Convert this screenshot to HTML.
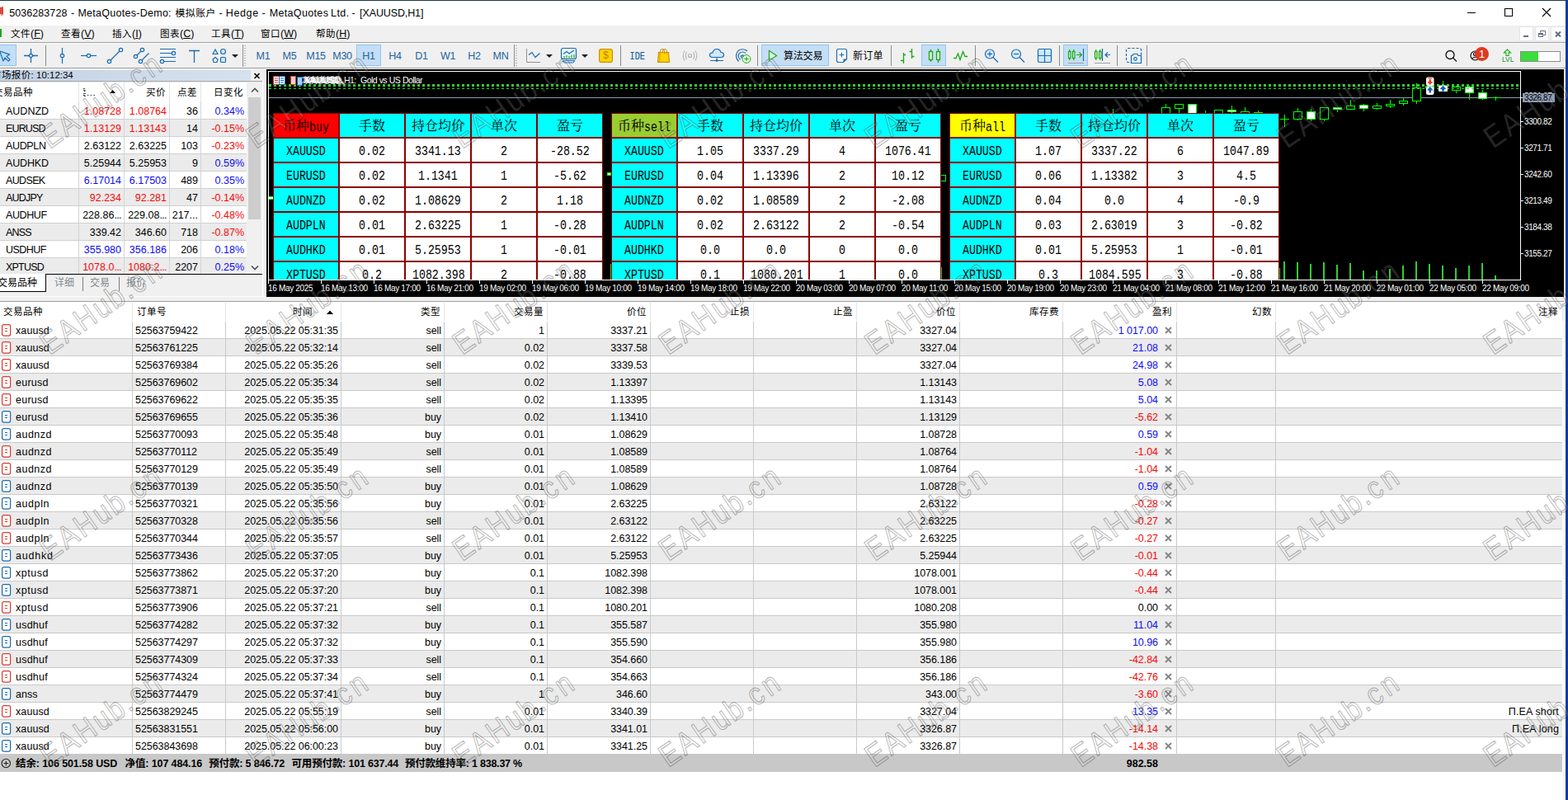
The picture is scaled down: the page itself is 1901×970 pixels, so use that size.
<!DOCTYPE html>
<html lang="zh-CN"><head><meta charset="utf-8"><title>MetaTrader 5</title>
<style>
html,body{margin:0;padding:0;background:#fff;}
body{width:1901px;height:970px;overflow:hidden;position:relative;font-family:"Liberation Sans","Noto Sans CJK SC",sans-serif;font-size:12px;color:#000;line-height:1;}
.a{position:absolute;}
.t{position:absolute;white-space:nowrap;line-height:1;}
svg{position:absolute;overflow:visible;}
#win{position:absolute;left:0;top:0;width:1901px;height:970px;overflow:hidden;background:#fff;}
#titlebar{left:0;top:1px;width:1898px;height:30px;background:#fff;}
#menubar{left:0;top:31px;width:1898px;height:20px;background:#f0f0f0;}
#toolbar{left:0;top:51px;width:1898px;height:32px;background:#f0f0f0;border-top:1px solid #a0a0a0;box-sizing:border-box;}
.menu{top:35px;font-size:12.5px;letter-spacing:0;}
.tf{top:62px;font-size:12.5px;color:#1b63a1;width:32px;text-align:center;letter-spacing:-0.3px;}
.sep{width:1px;background:#8a8a8a;top:55px;height:25px;}
.selbtn{background:#c4def5;border:1px solid #8fc6f5;box-sizing:border-box;}
/* market watch */
#mw{left:0;top:83px;width:321px;height:277px;background:#f0f0f0;overflow:hidden;}
.mwr{position:absolute;left:0;width:299px;height:20px;border-bottom:1px solid #d0d0d0;}
.mwr .c{position:absolute;top:5px;font-size:12.5px;white-space:nowrap;letter-spacing:0;}
.mwr .v{position:absolute;top:0;width:1px;height:20px;background:#d4d4d4;}
.red{color:#f40808;} .blue{color:#0c0cf4;}
/* chart */
#chart{left:323px;top:84px;width:1573px;height:276px;background:#000;overflow:hidden;}
.pt{font-family:"Liberation Serif","Noto Serif CJK SC",serif;}
.cell{position:absolute;width:80px;height:30px;box-sizing:border-box;border:1px solid #8b0000;overflow:hidden;}
.cell span{position:absolute;left:0;top:1px;width:78px;height:28px;line-height:28px;text-align:center;white-space:nowrap;font-size:16px;color:#000;}
.cell span i{font-style:normal;display:inline-block;transform-origin:50% 50%;}
/* trade table */
#tt{left:0;top:366px;width:1898px;height:604px;background:#fff;overflow:hidden;}
.tr{position:absolute;left:0;width:1894px;height:20px;border-bottom:1px solid #c9c9c9;}
.tr.g{background:#ebebeb;}
.tr .c{position:absolute;top:4.5px;font-size:12.5px;white-space:nowrap;letter-spacing:-0.05px;}
.tr .r{text-align:right;}
.tr .v{position:absolute;top:0;width:1px;height:21px;background:#c9c9c9;}
.wm{font-family:"Liberation Sans",sans-serif;}

.ax{font-size:10px;color:#fff;font-family:"Liberation Sans",sans-serif;letter-spacing:-0.4px;}
.tm{letter-spacing:-0.32px;}
.k{font-size:11.5px;letter-spacing:0.5px;}
.cell .cj{font-family:"Noto Serif CJK SC","Liberation Serif",serif;font-size:16px;font-weight:normal;position:relative;top:-1px;}
.cell span.cj{position:absolute;top:0;}
.cell .m{font-family:"Liberation Mono",monospace;font-size:16.6px;transform:scale(0.8,1);letter-spacing:0;}
</style></head>
<body><div id="win">
<div class="a" style="left:0;top:0;width:1901px;height:1px;background:#1c3a4a"></div>
<div class="a" style="left:1898px;top:0;width:3px;height:970px;background:#0b3b9c"></div>
<div class="a" id="titlebar"></div>
<svg style="left:0;top:8px" width="6" height="14" viewBox="0 0 6 14"><path d="M0 1 L4 0 L4 10 L0 9Z" fill="#e0483c"/><path d="M0 9 L4 10 L2 12Z" fill="#f4a49c"/></svg>
<div class="t" style="left:11.20px;top:10px;font-size:12.5px;letter-spacing:0.074px;">5036283728</div>
<div class="t" style="left:85.90px;top:10px;font-size:12.5px;letter-spacing:0.000px;">-</div>
<div class="t" style="left:94.40px;top:10px;font-size:12.5px;letter-spacing:0.275px;">MetaQuotes-Demo:</div>
<div class="t" style="left:212.50px;top:10.5px;font-size:11.8px;letter-spacing:0.532px;">模拟账户</div>
<div class="t" style="left:265.40px;top:10px;font-size:12.5px;letter-spacing:0.000px;">-</div>
<div class="t" style="left:273.80px;top:10px;font-size:12.5px;letter-spacing:0.614px;">Hedge</div>
<div class="t" style="left:317.40px;top:10px;font-size:12.5px;letter-spacing:0.000px;">-</div>
<div class="t" style="left:326.70px;top:10px;font-size:12.5px;letter-spacing:0.345px;">MetaQuotes</div>
<div class="t" style="left:401.10px;top:10px;font-size:12.5px;letter-spacing:0.414px;">Ltd.</div>
<div class="t" style="left:426.40px;top:10px;font-size:12.5px;letter-spacing:0.000px;">-</div>
<div class="t" style="left:436.10px;top:10px;font-size:12.5px;letter-spacing:-0.120px;">[XAUUSD,H1]</div>
<svg style="left:1770px;top:5px" width="120" height="20" viewBox="0 0 120 20"><path d="M9 10.5 H19" stroke="#000" stroke-width="1" fill="none"/><rect x="54.5" y="5.5" width="9" height="9" stroke="#000" stroke-width="1" fill="none"/><path d="M100 5 L110 15 M110 5 L100 15" stroke="#000" stroke-width="1.1" fill="none"/></svg>
<div class="a" id="menubar"></div>
<div class="a" style="left:0;top:35px;width:2px;height:10px;background:#1ca81c"></div>
<div class="t menu" style="left:13px"><span class="k">文件</span>(<u>F</u>)</div>
<div class="t menu" style="left:74px"><span class="k">查看</span>(<u>V</u>)</div>
<div class="t menu" style="left:136px"><span class="k">插入</span>(<u>I</u>)</div>
<div class="t menu" style="left:194px"><span class="k">图表</span>(<u>C</u>)</div>
<div class="t menu" style="left:256px"><span class="k">工具</span>(<u>T</u>)</div>
<div class="t menu" style="left:316px"><span class="k">窗口</span>(<u>W</u>)</div>
<div class="t menu" style="left:383px"><span class="k">帮助</span>(<u>H</u>)</div>
<div class="a" style="left:1842px;top:32px;width:17px;height:18px;background:#fff;border:1px solid #e6e6e6;box-sizing:border-box"></div>
<div class="a" style="left:1861px;top:32px;width:17px;height:18px;background:#fff;border:1px solid #e6e6e6;box-sizing:border-box"></div>
<div class="a" style="left:1880px;top:32px;width:17px;height:18px;background:#fff;border:1px solid #e6e6e6;box-sizing:border-box"></div>
<svg style="left:1842px;top:33px" width="56" height="17" viewBox="0 0 56 17"><rect x="5" y="10" width="6" height="2" fill="#5f6f82"/><path d="M25.5 6.5 V4.5 H31.5 V9.5 H29.5" stroke="#5f6f82" stroke-width="1" fill="none"/><rect x="23.5" y="7.5" width="5" height="4" stroke="#5f6f82" stroke-width="1" fill="none"/><rect x="23" y="7" width="6" height="2" fill="#5f6f82"/><path d="M44 5.5 L50 11.5 M50 5.5 L44 11.5" stroke="#5f6f82" stroke-width="2" fill="none"/></svg>
<div class="a" id="toolbar"></div>
<div class="a" style="left:0;top:52px;width:1898px;height:1px;background:#fbfbfb"></div>
<div class="a" style="left:0;top:82px;width:1898px;height:1px;background:#a0a0a0"></div>
<div class="a" style="left:0;top:83px;width:1898px;height:1px;background:#fafafa"></div>
<div class="a selbtn" style="left:-1px;top:54px;width:21px;height:26px"></div>
<div class="a selbtn" style="left:432px;top:54px;width:30px;height:26px"></div>
<div class="a selbtn" style="left:923px;top:54px;width:82px;height:26px"></div>
<div class="a selbtn" style="left:1117px;top:54px;width:30px;height:26px"></div>
<div class="a selbtn" style="left:1289px;top:54px;width:30px;height:26px"></div>
<div class="a sep" style="left:55px"></div>
<div class="a sep" style="left:752px"></div>
<div class="a sep" style="left:918px"></div>
<div class="a sep" style="left:1080px"></div>
<div class="a sep" style="left:1182px"></div>
<div class="a sep" style="left:1284px"></div>
<div class="a sep" style="left:1354px"></div>
<div class="a sep" style="left:1390px"></div>
<div class="a" style="left:294px;top:54px;width:1px;height:27px;background:#909090"></div>
<div class="a" style="left:296px;top:55px;width:2px;height:25px;background:repeating-linear-gradient(#b8b8b8 0 1px,transparent 1px 3px)"></div>
<div class="a" style="left:623px;top:54px;width:1px;height:27px;background:#909090"></div>
<div class="a" style="left:625px;top:55px;width:2px;height:25px;background:repeating-linear-gradient(#b8b8b8 0 1px,transparent 1px 3px)"></div>
<div class="t tf" style="left:303px">M1</div>
<div class="t tf" style="left:335px">M5</div>
<div class="t tf" style="left:367px">M15</div>
<div class="t tf" style="left:399px">M30</div>
<div class="t tf" style="left:431px">H1</div>
<div class="t tf" style="left:463px">H4</div>
<div class="t tf" style="left:495px">D1</div>
<div class="t tf" style="left:527px">W1</div>
<div class="t tf" style="left:559px">H2</div>
<div class="t tf" style="left:591px">MN</div>
<div class="t" style="left:760.5px;top:61.5px;font-family:'Liberation Mono',monospace;font-size:13px;color:#125ea0;transform:scaleX(0.78);transform-origin:50% 50%;-webkit-text-stroke:0.2px #125ea0">IDE</div>
<div class="t" style="left:950px;top:62px;font-size:12px;letter-spacing:-0.2px">算法交易</div>
<div class="t" style="left:1034px;top:62px;font-size:12px;letter-spacing:0.3px">新订单</div>
<svg style="left:0;top:52px" width="1898" height="30" viewBox="0 52 1898 30" fill="none" stroke-linecap="butt"><path d="M-3 61 L11.7 66.1 L8.2 68.300 L12 72.400 L10.2 74.100 L6 70 L4 74 L0 63 Z" fill="#bee3fb" stroke-linejoin="round" stroke="#1b6ab0" stroke-width="1.2"/><path d="M29 67.5 H46 M37.5 59 V76" stroke="#1b6ab0" stroke-width="1.3"/><path d="M37.5 64.800 L40.2 67.5 L37.5 70.2 L34.8 67.5 Z" fill="#cfe9ff" stroke="#1b6ab0" stroke-width="1.3"/><path d="M75.5 58 V77" stroke="#1b6ab0" stroke-width="1.2"/><circle cx="75.5" cy="67.5" r="2.2" fill="#e8f3fc" stroke="#1b6ab0" stroke-width="1.2"/><path d="M98 67.5 H117" stroke="#1b6ab0" stroke-width="1.2"/><circle cx="107.5" cy="67.5" r="2.2" fill="#e8f3fc" stroke="#1b6ab0" stroke-width="1.2"/><path d="M132.5 74.5 L146.5 60.5" stroke="#1b6ab0" stroke-width="1.2"/><circle cx="132.5" cy="74.5" r="2.2" fill="#e8f3fc" stroke="#1b6ab0" stroke-width="1.2"/><circle cx="146.5" cy="60.5" r="2.2" fill="#e8f3fc" stroke="#1b6ab0" stroke-width="1.2"/><path d="M164.5 68.5 L172.5 60.5 M170.5 74.5 L180.5 64.5" stroke="#1b6ab0" stroke-width="1.2"/><circle cx="164.5" cy="68.5" r="2.2" fill="#e8f3fc" stroke="#1b6ab0" stroke-width="1.2"/><circle cx="172.5" cy="60.5" r="2.2" fill="#e8f3fc" stroke="#1b6ab0" stroke-width="1.2"/><circle cx="170.5" cy="74.5" r="2.2" fill="#e8f3fc" stroke="#1b6ab0" stroke-width="1.2"/><path d="M194 59.5 H213 M194 64.5 H209 M194 69.5 H213 M198 74.5 H213" stroke="#1b6ab0" stroke-width="1.2"/><circle cx="210.5" cy="64.5" r="2.2" fill="#e8f3fc" stroke="#1b6ab0" stroke-width="1.2"/><circle cx="196.5" cy="74.5" r="2.2" fill="#e8f3fc" stroke="#1b6ab0" stroke-width="1.2"/><path d="M229 61.5 H242 M235.5 61.5 V76" stroke="#1b6ab0" stroke-width="1.3"/><path d="M258 65.5 L261 60 L264 65.5 Z" fill="#e8f3fc" stroke="#1b6ab0" stroke-width="1.2"/><circle cx="270.5" cy="62.5" r="3" fill="#cfe9ff" stroke="#1b6ab0" stroke-width="1.2"/><path d="M258 72 L261 69.5 L264 72 L263 75.5 H259 Z" fill="#e8f3fc" stroke="#1b6ab0" stroke-width="1.2"/><rect x="267.5" y="69.5" width="6" height="6" rx="1" fill="#cfe9ff" stroke="#1b6ab0" stroke-width="1.2"/><path d="M281 66 H289 L285 70 Z" fill="#222" stroke="none"/><path d="M662 66 H670 L666 70 Z" fill="#222" stroke="none"/><path d="M705 66 H713 L709 70 Z" fill="#222" stroke="none"/><path d="M638.5 59 V75.5 H655" stroke="#909090" stroke-width="1"/><path d="M641 66.5 L645 63.5 L649 69.5 L654.5 64.5" stroke="#1b6ab0" stroke-width="1.2"/><rect x="680.5" y="58.5" width="18" height="13" rx="2" fill="#e8f3fc" stroke="#1b6ab0" stroke-width="1.2"/><path d="M682 73.5 H697 L695 76 H684 Z" fill="#cfe9ff" stroke="#1b6ab0" stroke-width="1"/><path d="M683 65.5 L687 62.5 L690 65 L696 61" stroke="#1b6ab0" stroke-width="1.1"/><path d="M684 68 V70.5 M687 67 V70.5 M690 68 V70.5 M693 66.5 V70.5 M696 66 V70.5" stroke="#18a818" stroke-width="1.2"/><rect x="726.6" y="59.6" width="15.8" height="15.8" rx="2.5" fill="#ffd400" stroke="#cc8f00" stroke-width="1.2"/><path d="M798.5 63.500 H810.500 L811.500 75.400 H797.500 Z" fill="#ffd400" stroke="#cc8f00" stroke-width="1.1"/><path d="M800 63.500 L799.500 75" stroke="#e0a400" stroke-width="1"/><path d="M800.500 65.500 V62.200 Q800.500 59.500 803 59.500 Q805.500 59.500 805.500 62.200 V65.500 M803.500 63 V62.200 Q803.500 59.500 806 59.500 Q808.500 59.500 808.500 62.200 V65.500" stroke="#cc8f00" stroke-width="1"/><circle cx="836.5" cy="67.5" r="2" stroke="#b0b0b0" stroke-width="1.2"/><path d="M832.5 63 Q830 67.5 832.5 72 M840.5 63 Q843 67.5 840.5 72 M830 61.5 Q826.5 67.5 830 73.5 M843 61.5 Q846.5 67.5 843 73.5" stroke="#b8b8b8" stroke-width="1.1"/><path d="M864 69.500 Q860.500 69.500 860.500 66.500 Q860.500 64 864 63.800 Q865 59.500 869 59.500 Q873 59.500 874 63.500 Q877.500 63.800 877.500 66.500 Q877.500 69.500 874 69.500 Z" fill="#cfe8fc" stroke="#1b6ab0" stroke-width="1.2"/><path d="M861 73.500 H877 M869 69.500 V73" stroke="#1b6ab0" stroke-width="1.1"/><circle cx="869" cy="73.500" r="1.400" fill="#1b6ab0"/><path d="M895.5 74.500 Q890 68 894.500 62 Q900 57.500 906 62 M897.500 72.500 Q893.500 68 896.500 64.500 Q900 61.500 904 64.500 M899.500 70.500 Q897.500 68.500 899 67" stroke="#1b6ab0" stroke-width="1.2"/><circle cx="900.5" cy="67.500" r="1.2" fill="#1b6ab0" stroke="none"/><circle cx="905" cy="71.500" r="4.900" fill="#ecffec" stroke="#18a818" stroke-width="1"/><path d="M902.300 71.500 H907.700 M905 68.800 V74.200" stroke="#18a818" stroke-width="1.1"/><path d="M932.5 61.5 L941.5 67.5 L932.5 73.5 Z" fill="#e0ffe0" stroke="#18a818" stroke-width="1.2"/><path d="M1016.5 59.5 H1024.5 Q1026.5 59.5 1026.5 61.5 V71.5 L1022.5 75.5 H1016.5 Q1014.5 75.5 1014.5 73.5 V61.5 Q1014.5 59.5 1016.5 59.5 Z" fill="#fff" stroke="#1b6ab0" stroke-width="1.2"/><path d="M1026.5 71.5 L1022.5 75.5 V71.5 Z" fill="#1b6ab0"/><path d="M1017.5 66.5 H1023.5 M1020.5 63.5 V69.5" stroke="#1b6ab0" stroke-width="1.1"/><path d="M1095.5 64 V77 M1092 73.5 H1095.5 M1095.5 66.5 H1098 M1105.5 59 V71 M1102.5 62.5 H1105.5 M1105.5 68.5 H1108.5" stroke="#18a818" stroke-width="1.3"/><rect x="1126.5" y="62.5" width="4" height="10" fill="#d8f5d8" stroke="#18a818" stroke-width="1.3"/><rect x="1135.5" y="62.5" width="4" height="10" fill="#d8f5d8" stroke="#18a818" stroke-width="1.3"/><path d="M1128.5 60 V62 M1128.5 73 V75 M1137.5 59 V62 M1137.5 73 V76" stroke="#18a818" stroke-width="1.3"/><path d="M1156 70.5 H1159 L1161.5 65 L1164 72.5 L1167.5 62.5 L1170 68.5 H1173" stroke="#18a818" stroke-width="1.3"/><circle cx="1200" cy="65.5" r="5.5" fill="#d4ecff" stroke="#1b6ab0" stroke-width="1.2"/><path d="M1204 69.5 L1210 75.5" stroke="#1b6ab0" stroke-width="1.3"/><path d="M1197 65.5 H1203" stroke="#1b6ab0" stroke-width="1.2"/><path d="M1200 62.5 V68.5" stroke="#1b6ab0" stroke-width="1.2"/><circle cx="1232" cy="65.5" r="5.5" fill="#d4ecff" stroke="#1b6ab0" stroke-width="1.2"/><path d="M1236 69.5 L1242 75.5" stroke="#1b6ab0" stroke-width="1.3"/><path d="M1229 65.5 H1235" stroke="#1b6ab0" stroke-width="1.2"/><rect x="1258.5" y="59.5" width="16" height="16" rx="1.5" fill="#cfe9ff" stroke="#1b6ab0" stroke-width="1.2"/><path d="M1266.5 59.5 V75.5 M1258.5 67.5 H1274.5" stroke="#1b6ab0" stroke-width="1.2"/><rect x="1295.5" y="62.5" width="2.5" height="8" fill="#d8f5d8" stroke="#18a818" stroke-width="1.2"/><rect x="1300.5" y="62.5" width="2.5" height="8" fill="#d8f5d8" stroke="#18a818" stroke-width="1.2"/><path d="M1296.7 60 V62 M1296.7 71 V73 M1301.7 60 V62 M1301.7 71 V73" stroke="#18a818" stroke-width="1.2"/><path d="M1305 66.5 H1311 M1308.5 63.5 L1311.5 66.5 L1308.5 69.5" stroke="#18a818" stroke-width="1.2"/><path d="M1313.5 59 V74" stroke="#1b6ab0" stroke-width="1.2"/><path d="M1295 76.5 H1314" stroke="#a0a0a0" stroke-width="1"/><rect x="1327.5" y="62.5" width="2.5" height="8" fill="#d8f5d8" stroke="#18a818" stroke-width="1.2"/><rect x="1332.5" y="62.5" width="2.5" height="8" fill="#d8f5d8" stroke="#18a818" stroke-width="1.2"/><path d="M1328.7 60 V62 M1328.7 71 V73 M1333.7 60 V62 M1333.7 71 V73" stroke="#18a818" stroke-width="1.2"/><path d="M1336.5 59 V74" stroke="#1b6ab0" stroke-width="1.2"/><path d="M1340 66.5 H1346 M1343 63.5 L1340 66.5 L1343 69.5" stroke="#1b6ab0" stroke-width="1.2"/><path d="M1327 76.5 H1346" stroke="#a0a0a0" stroke-width="1"/><rect x="1365.5" y="58.5" width="18" height="17" rx="2" stroke="#1b6ab0" stroke-width="1.2" stroke-dasharray="3 2"/><path d="M1371.5 67.5 H1373 L1374 65.5 H1379 L1380 67.5 H1383.5 V76.5 H1371.5 Z" fill="#e8f3fc" stroke="#1b6ab0" stroke-width="1.2"/><circle cx="1376.5" cy="71.5" r="1.8" stroke="#1b6ab0" stroke-width="1.2"/><circle cx="1758" cy="66.5" r="5" stroke="#111" stroke-width="1.3"/><path d="M1761.5 70 L1766 74.5" stroke="#111" stroke-width="1.3"/><circle cx="1788.5" cy="67.500" r="5.5" stroke="#111" stroke-width="1.2"/><circle cx="1788.5" cy="65.5" r="2" stroke="#111" stroke-width="1.1"/><path d="M1784.5 71.5 Q1788.5 67 1792.500 71.500" stroke="#111" stroke-width="1.1"/><circle cx="1796.5" cy="65.500" r="8.5" fill="#e03a22"/><path d="M1827.5 60 L1823.500 64 H1826 V67.5 H1829 V64 H1831.500 Z" fill="#f4fff4" stroke="#18a818" stroke-width="1.1"/><rect x="1843.5" y="62.500" width="48" height="12" fill="#fff" stroke="#8a8a8a" stroke-width="1"/><rect x="1844" y="63" width="21" height="11" fill="#3cdc3c"/></svg>
<div class="t" style="left:728.5px;top:61px;width:12px;text-align:center;font-size:12.5px;color:#c08400">$</div>
<div class="t" style="left:1792.5px;top:59px;width:8px;text-align:center;font-size:13px;color:#fff">1</div>
<div class="t" style="left:1821px;top:68px;font-size:8.5px;color:#109828;letter-spacing:0">LVL</div>
<div class="a" id="mw">
<div class="a" style="left:0;top:2px;width:304px;height:13px;background:linear-gradient(90deg,#c0d0e4 0,#d0dcea 60%,#d6e1ee 100%)"></div>
<div class="a" style="left:304px;top:0;width:17px;height:16px;background:#f0f0f0"></div>
<div class="t" style="left:-10px;top:3px;font-size:11.5px;letter-spacing:0"><span style="letter-spacing:0.4px">市场报价</span>: 10:12:34</div>
<svg style="left:307px;top:4px" width="10" height="10" viewBox="0 0 10 10"><path d="M1.5 2 L7.500 8 M7.500 2 L1.5 8" stroke="#000" stroke-width="1.6" fill="none"/></svg>
<div class="a" style="left:0;top:17px;width:299px;height:24px;background:#fff"></div>
<div class="a" style="left:0;top:15px;width:318px;height:1px;background:#a8a8a8"></div><div class="a" style="left:0;top:16px;width:318px;height:1px;background:#e8e8e8"></div>
<div class="a" style="left:95px;top:17px;width:1px;height:24px;background:#e4e4e4"></div>
<div class="a" style="left:150px;top:17px;width:1px;height:24px;background:#e4e4e4"></div>
<div class="a" style="left:205px;top:17px;width:1px;height:24px;background:#e4e4e4"></div>
<div class="a" style="left:243px;top:17px;width:1px;height:24px;background:#e4e4e4"></div>
<div class="t k" style="left:-8px;top:24px">交易品种</div>
<div class="t k" style="left:101px;top:24px;width:18px;overflow:hidden;height:14px"><span style="margin-left:-8px">卖...</span></div>
<svg style="left:132.5px;top:26px" width="7" height="4" viewBox="0 0 7 4"><path d="M0 4 L3.5 0 L7 4Z" fill="#000"/></svg>
<div class="t k" style="left:150px;top:24px;width:51px;text-align:right;">买价</div>
<div class="t k" style="left:205px;top:24px;width:34px;text-align:right;">点差</div>
<div class="t k" style="left:243px;top:24px;width:52px;text-align:right;">日变化</div>
<div class="mwr" style="top:41px;background:#fff">
<div class="c" style="left:7px;letter-spacing:0px">AUDNZD</div>
<div class="c red" style="left:95px;width:52px;text-align:right">1.08728</div>
<div class="c red" style="left:150px;width:52px;text-align:right">1.08764</div>
<div class="c" style="left:205px;width:35px;text-align:right">36</div>
<div class="c blue" style="left:243px;width:53px;text-align:right">0.34%</div>
<div class="v" style="left:95px"></div>
<div class="v" style="left:150px"></div>
<div class="v" style="left:205px"></div>
<div class="v" style="left:243px"></div>
</div>
<div class="mwr" style="top:62px;background:#ebebeb">
<div class="c" style="left:7px;letter-spacing:-0.85px">EURUSD</div>
<div class="c red" style="left:95px;width:52px;text-align:right">1.13129</div>
<div class="c red" style="left:150px;width:52px;text-align:right">1.13143</div>
<div class="c" style="left:205px;width:35px;text-align:right">14</div>
<div class="c red" style="left:243px;width:53px;text-align:right">-0.15%</div>
<div class="v" style="left:95px"></div>
<div class="v" style="left:150px"></div>
<div class="v" style="left:205px"></div>
<div class="v" style="left:243px"></div>
</div>
<div class="mwr" style="top:83px;background:#fff">
<div class="c" style="left:7px;letter-spacing:-0.35px">AUDPLN</div>
<div class="c " style="left:95px;width:52px;text-align:right">2.63122</div>
<div class="c " style="left:150px;width:52px;text-align:right">2.63225</div>
<div class="c" style="left:205px;width:35px;text-align:right">103</div>
<div class="c red" style="left:243px;width:53px;text-align:right">-0.23%</div>
<div class="v" style="left:95px"></div>
<div class="v" style="left:150px"></div>
<div class="v" style="left:205px"></div>
<div class="v" style="left:243px"></div>
</div>
<div class="mwr" style="top:104px;background:#ebebeb">
<div class="c" style="left:7px;letter-spacing:-0.15px">AUDHKD</div>
<div class="c " style="left:95px;width:52px;text-align:right">5.25944</div>
<div class="c " style="left:150px;width:52px;text-align:right">5.25953</div>
<div class="c" style="left:205px;width:35px;text-align:right">9</div>
<div class="c blue" style="left:243px;width:53px;text-align:right">0.59%</div>
<div class="v" style="left:95px"></div>
<div class="v" style="left:150px"></div>
<div class="v" style="left:205px"></div>
<div class="v" style="left:243px"></div>
</div>
<div class="mwr" style="top:125px;background:#fff">
<div class="c" style="left:7px;letter-spacing:-0.65px">AUDSEK</div>
<div class="c blue" style="left:95px;width:52px;text-align:right">6.17014</div>
<div class="c blue" style="left:150px;width:52px;text-align:right">6.17503</div>
<div class="c" style="left:205px;width:35px;text-align:right">489</div>
<div class="c blue" style="left:243px;width:53px;text-align:right">0.35%</div>
<div class="v" style="left:95px"></div>
<div class="v" style="left:150px"></div>
<div class="v" style="left:205px"></div>
<div class="v" style="left:243px"></div>
</div>
<div class="mwr" style="top:146px;background:#ebebeb">
<div class="c" style="left:7px;letter-spacing:-0.8px">AUDJPY</div>
<div class="c red" style="left:95px;width:52px;text-align:right">92.234</div>
<div class="c red" style="left:150px;width:52px;text-align:right">92.281</div>
<div class="c" style="left:205px;width:35px;text-align:right">47</div>
<div class="c red" style="left:243px;width:53px;text-align:right">-0.14%</div>
<div class="v" style="left:95px"></div>
<div class="v" style="left:150px"></div>
<div class="v" style="left:205px"></div>
<div class="v" style="left:243px"></div>
</div>
<div class="mwr" style="top:167px;background:#fff">
<div class="c" style="left:7px;letter-spacing:-0.4px">AUDHUF</div>
<div class="c " style="left:95px;width:52px;text-align:right">228.86<span style="letter-spacing:-0.6px">...</span></div>
<div class="c " style="left:150px;width:52px;text-align:right">229.08<span style="letter-spacing:-0.6px">...</span></div>
<div class="c" style="left:205px;width:35px;text-align:right">217...</div>
<div class="c red" style="left:243px;width:53px;text-align:right">-0.48%</div>
<div class="v" style="left:95px"></div>
<div class="v" style="left:150px"></div>
<div class="v" style="left:205px"></div>
<div class="v" style="left:243px"></div>
</div>
<div class="mwr" style="top:188px;background:#ebebeb">
<div class="c" style="left:7px;letter-spacing:-0.85px">ANSS</div>
<div class="c " style="left:95px;width:52px;text-align:right">339.42</div>
<div class="c " style="left:150px;width:52px;text-align:right">346.60</div>
<div class="c" style="left:205px;width:35px;text-align:right">718</div>
<div class="c red" style="left:243px;width:53px;text-align:right">-0.87%</div>
<div class="v" style="left:95px"></div>
<div class="v" style="left:150px"></div>
<div class="v" style="left:205px"></div>
<div class="v" style="left:243px"></div>
</div>
<div class="mwr" style="top:209px;background:#fff">
<div class="c" style="left:7px;letter-spacing:-0.55px">USDHUF</div>
<div class="c blue" style="left:95px;width:52px;text-align:right">355.980</div>
<div class="c blue" style="left:150px;width:52px;text-align:right">356.186</div>
<div class="c" style="left:205px;width:35px;text-align:right">206</div>
<div class="c blue" style="left:243px;width:53px;text-align:right">0.18%</div>
<div class="v" style="left:95px"></div>
<div class="v" style="left:150px"></div>
<div class="v" style="left:205px"></div>
<div class="v" style="left:243px"></div>
</div>
<div class="mwr" style="top:230px;background:#ebebeb">
<div class="c" style="left:7px;letter-spacing:-0.8px">XPTUSD</div>
<div class="c red" style="left:95px;width:52px;text-align:right">1078.0<span style="letter-spacing:-0.6px">...</span></div>
<div class="c red" style="left:150px;width:52px;text-align:right">1080.2<span style="letter-spacing:-0.6px">...</span></div>
<div class="c" style="left:205px;width:35px;text-align:right">2207</div>
<div class="c blue" style="left:243px;width:53px;text-align:right">0.25%</div>
<div class="v" style="left:95px"></div>
<div class="v" style="left:150px"></div>
<div class="v" style="left:205px"></div>
<div class="v" style="left:243px"></div>
</div>
<div class="a" style="left:299px;top:17px;width:19px;height:232px;background:#f0f0f0"></div>
<div class="a" style="left:301px;top:35px;width:15px;height:148px;background:#cdcdcd"></div>
<svg style="left:303px;top:22px" width="12" height="8" viewBox="0 0 12 8"><path d="M2 6.500 L6 2.500 L10 6.500" stroke="#505050" stroke-width="1.6" fill="none"/></svg>
<svg style="left:303px;top:237.5px" width="12" height="8" viewBox="0 0 12 8"><path d="M2 1.5 L6 5.500 L10 1.5" stroke="#505050" stroke-width="1.6" fill="none"/></svg>
<div class="a" style="left:0;top:249px;width:318px;height:1px;background:#000"></div><div class="a" style="left:0;top:250px;width:318px;height:27px;background:#f0f0f0"></div><div class="a" style="left:0;top:276px;width:321px;height:1px;background:#fcfcfc"></div>
<div class="a" style="left:0;top:249px;width:56px;height:22px;background:#fff;border-right:1px solid #000;border-bottom:1px solid #000;box-sizing:border-box"></div>
<div class="t" style="left:-3px;top:254px;font-size:12px">交易品种</div>
<div class="t" style="left:66px;top:254px;font-size:12px;color:#848a90">详细</div>
<div class="t" style="left:109px;top:254px;font-size:12px;color:#848a90">交易</div>
<div class="t" style="left:153px;top:254px;font-size:12px;color:#848a90">报价</div>
<div class="a" style="left:100px;top:253px;width:1px;height:17px;background:#7c7c7c"></div>
<div class="a" style="left:144px;top:253px;width:1px;height:17px;background:#7c7c7c"></div>
<div class="a" style="left:318px;top:17px;width:1px;height:260px;background:#fff"></div>
</div>
<div class="a" id="chart">
<svg style="left:0;top:0" width="1573" height="276" viewBox="323 84 1573 276" fill="none" shape-rendering="crispEdges"><path d="M325.5 339.500 V86.500 H1843.5 V339.500 Z" stroke="#fff" stroke-width="1"/><path d="M326 118.500 H1843" stroke="#8c9cb4" stroke-width="1"/><rect x="1349" y="132" width="1" height="11" fill="#00ff00"/><rect x="1344.5" y="138.5" width="10" height="2" fill="#000" stroke="#00ff00" stroke-width="1"/><rect x="1413" y="126" width="1" height="16" fill="#00ff00"/><rect x="1408.5" y="130.5" width="10" height="10" fill="#000" stroke="#00ff00" stroke-width="1"/><rect x="1429" y="126" width="1" height="14" fill="#00ff00"/><rect x="1424.5" y="126.5" width="10" height="5" fill="#000" stroke="#00ff00" stroke-width="1"/><rect x="1445" y="126" width="1" height="14" fill="#00ff00"/><rect x="1440.5" y="126.5" width="10" height="13" fill="#fff" stroke="#00ff00" stroke-width="1"/><rect x="1461" y="134" width="1" height="7" fill="#00ff00"/><rect x="1456.5" y="137.5" width="10" height="2" fill="#000" stroke="#00ff00" stroke-width="1"/><rect x="1477" y="133" width="1" height="8" fill="#00ff00"/><rect x="1472.5" y="133.5" width="10" height="6" fill="#000" stroke="#00ff00" stroke-width="1"/><rect x="1493" y="128" width="1" height="12" fill="#00ff00"/><rect x="1488.5" y="133.5" width="10" height="2" fill="#fff" stroke="#00ff00" stroke-width="1"/><rect x="1509" y="130" width="1" height="11" fill="#00ff00"/><rect x="1504.5" y="135.5" width="10" height="4" fill="#000" stroke="#00ff00" stroke-width="1"/><rect x="1525" y="134" width="1" height="7" fill="#00ff00"/><rect x="1520.5" y="136.5" width="10" height="3" fill="#000" stroke="#00ff00" stroke-width="1"/><rect x="1557" y="139" width="1" height="15" fill="#00ff00"/><rect x="1552" y="144" width="11" height="1" fill="#00ff00"/><rect x="1573" y="131" width="1" height="15" fill="#00ff00"/><rect x="1568.5" y="135.5" width="10" height="9" fill="#000" stroke="#00ff00" stroke-width="1"/><rect x="1589" y="132" width="1" height="15" fill="#00ff00"/><rect x="1584.5" y="135.5" width="10" height="9" fill="#fff" stroke="#00ff00" stroke-width="1"/><rect x="1605" y="130" width="1" height="17" fill="#00ff00"/><rect x="1600.5" y="130.5" width="10" height="14" fill="#000" stroke="#00ff00" stroke-width="1"/><rect x="1621" y="130" width="1" height="6" fill="#00ff00"/><rect x="1616.5" y="130.5" width="10" height="2" fill="#fff" stroke="#00ff00" stroke-width="1"/><rect x="1637" y="121" width="1" height="12" fill="#00ff00"/><rect x="1632.5" y="128.5" width="10" height="4" fill="#000" stroke="#00ff00" stroke-width="1"/><rect x="1653" y="126" width="1" height="9" fill="#00ff00"/><rect x="1648.5" y="127.5" width="10" height="4" fill="#fff" stroke="#00ff00" stroke-width="1"/><rect x="1669" y="125" width="1" height="8" fill="#00ff00"/><rect x="1664.5" y="128.5" width="10" height="3" fill="#000" stroke="#00ff00" stroke-width="1"/><rect x="1685" y="121" width="1" height="10" fill="#00ff00"/><rect x="1680.5" y="126.5" width="10" height="2" fill="#000" stroke="#00ff00" stroke-width="1"/><rect x="1701" y="119" width="1" height="9" fill="#00ff00"/><rect x="1696.5" y="122.5" width="10" height="3" fill="#000" stroke="#00ff00" stroke-width="1"/><rect x="1717" y="101" width="1" height="25" fill="#00ff00"/><rect x="1712.5" y="106.5" width="10" height="16" fill="#000" stroke="#00ff00" stroke-width="1"/><rect x="1733" y="100" width="1" height="9" fill="#00ff00"/><rect x="1728.5" y="104.5" width="10" height="2" fill="#000" stroke="#00ff00" stroke-width="1"/><rect x="1749" y="98" width="1" height="13" fill="#00ff00"/><rect x="1744.5" y="104.5" width="10" height="6" fill="#fff" stroke="#00ff00" stroke-width="1"/><rect x="1765" y="104" width="1" height="9" fill="#00ff00"/><rect x="1760.5" y="105.5" width="10" height="4" fill="#000" stroke="#00ff00" stroke-width="1"/><rect x="1781" y="104" width="1" height="17" fill="#00ff00"/><rect x="1776.5" y="105.5" width="10" height="7" fill="#fff" stroke="#00ff00" stroke-width="1"/><rect x="1797" y="109" width="1" height="12" fill="#00ff00"/><rect x="1792.5" y="112.5" width="10" height="7" fill="#fff" stroke="#00ff00" stroke-width="1"/><rect x="1813" y="117" width="1" height="5" fill="#00ff00"/><rect x="1808" y="118" width="11" height="1" fill="#00ff00"/><rect x="1556" y="317" width="2" height="22" fill="#32cd32"/><rect x="1572" y="318" width="2" height="21" fill="#32cd32"/><rect x="1588" y="320" width="2" height="19" fill="#32cd32"/><rect x="1604" y="318" width="2" height="21" fill="#32cd32"/><rect x="1620" y="321" width="2" height="18" fill="#32cd32"/><rect x="1636" y="319" width="2" height="20" fill="#32cd32"/><rect x="1652" y="328" width="2" height="11" fill="#32cd32"/><rect x="1668" y="328" width="2" height="11" fill="#32cd32"/><rect x="1684" y="326" width="2" height="13" fill="#32cd32"/><rect x="1700" y="322" width="2" height="17" fill="#32cd32"/><rect x="1716" y="317" width="2" height="22" fill="#32cd32"/><rect x="1732" y="320" width="2" height="19" fill="#32cd32"/><rect x="1748" y="322" width="2" height="17" fill="#32cd32"/><rect x="1764" y="325" width="2" height="14" fill="#32cd32"/><rect x="1780" y="322" width="2" height="17" fill="#32cd32"/><rect x="1796" y="319" width="2" height="20" fill="#32cd32"/><rect x="1812" y="334" width="2" height="5" fill="#32cd32"/><rect x="340" y="322" width="2" height="17" fill="#32cd32"/><rect x="356" y="320" width="2" height="19" fill="#32cd32"/><rect x="372" y="318" width="2" height="21" fill="#32cd32"/><rect x="388" y="316" width="2" height="23" fill="#32cd32"/><rect x="404" y="314" width="2" height="25" fill="#32cd32"/><rect x="420" y="312" width="2" height="27" fill="#32cd32"/><rect x="436" y="321" width="2" height="18" fill="#32cd32"/><rect x="452" y="319" width="2" height="20" fill="#32cd32"/><rect x="468" y="317" width="2" height="22" fill="#32cd32"/><rect x="484" y="315" width="2" height="24" fill="#32cd32"/><rect x="500" y="313" width="2" height="26" fill="#32cd32"/><rect x="516" y="322" width="2" height="17" fill="#32cd32"/><rect x="532" y="320" width="2" height="19" fill="#32cd32"/><rect x="548" y="318" width="2" height="21" fill="#32cd32"/><rect x="564" y="316" width="2" height="23" fill="#32cd32"/><rect x="580" y="314" width="2" height="25" fill="#32cd32"/><rect x="596" y="312" width="2" height="27" fill="#32cd32"/><rect x="612" y="321" width="2" height="18" fill="#32cd32"/><rect x="628" y="319" width="2" height="20" fill="#32cd32"/><rect x="644" y="317" width="2" height="22" fill="#32cd32"/><rect x="660" y="315" width="2" height="24" fill="#32cd32"/><rect x="676" y="313" width="2" height="26" fill="#32cd32"/><rect x="692" y="322" width="2" height="17" fill="#32cd32"/><rect x="708" y="320" width="2" height="19" fill="#32cd32"/><rect x="724" y="318" width="2" height="21" fill="#32cd32"/><rect x="740" y="320" width="2" height="19" fill="#32cd32"/><rect x="756" y="314" width="2" height="25" fill="#32cd32"/><rect x="772" y="312" width="2" height="27" fill="#32cd32"/><rect x="788" y="321" width="2" height="18" fill="#32cd32"/><rect x="804" y="319" width="2" height="20" fill="#32cd32"/><rect x="820" y="317" width="2" height="22" fill="#32cd32"/><rect x="836" y="315" width="2" height="24" fill="#32cd32"/><rect x="852" y="313" width="2" height="26" fill="#32cd32"/><rect x="868" y="322" width="2" height="17" fill="#32cd32"/><rect x="884" y="320" width="2" height="19" fill="#32cd32"/><rect x="900" y="318" width="2" height="21" fill="#32cd32"/><rect x="916" y="316" width="2" height="23" fill="#32cd32"/><rect x="932" y="314" width="2" height="25" fill="#32cd32"/><rect x="948" y="312" width="2" height="27" fill="#32cd32"/><rect x="964" y="321" width="2" height="18" fill="#32cd32"/><rect x="980" y="319" width="2" height="20" fill="#32cd32"/><rect x="996" y="317" width="2" height="22" fill="#32cd32"/><rect x="1012" y="315" width="2" height="24" fill="#32cd32"/><rect x="1028" y="313" width="2" height="26" fill="#32cd32"/><rect x="1044" y="322" width="2" height="17" fill="#32cd32"/><rect x="1060" y="320" width="2" height="19" fill="#32cd32"/><rect x="1076" y="318" width="2" height="21" fill="#32cd32"/><rect x="1092" y="316" width="2" height="23" fill="#32cd32"/><rect x="1108" y="314" width="2" height="25" fill="#32cd32"/><rect x="1124" y="312" width="2" height="27" fill="#32cd32"/><rect x="1140" y="324" width="2" height="15" fill="#32cd32"/><rect x="1156" y="319" width="2" height="20" fill="#32cd32"/><rect x="1172" y="317" width="2" height="22" fill="#32cd32"/><rect x="1188" y="315" width="2" height="24" fill="#32cd32"/><rect x="1204" y="313" width="2" height="26" fill="#32cd32"/><rect x="1220" y="322" width="2" height="17" fill="#32cd32"/><rect x="1236" y="320" width="2" height="19" fill="#32cd32"/><rect x="1252" y="318" width="2" height="21" fill="#32cd32"/><rect x="1268" y="316" width="2" height="23" fill="#32cd32"/><rect x="1284" y="314" width="2" height="25" fill="#32cd32"/><rect x="1300" y="312" width="2" height="27" fill="#32cd32"/><rect x="1316" y="321" width="2" height="18" fill="#32cd32"/><rect x="1332" y="319" width="2" height="20" fill="#32cd32"/><rect x="1348" y="317" width="2" height="22" fill="#32cd32"/><rect x="1364" y="315" width="2" height="24" fill="#32cd32"/><rect x="1380" y="313" width="2" height="26" fill="#32cd32"/><rect x="1396" y="322" width="2" height="17" fill="#32cd32"/><rect x="1412" y="320" width="2" height="19" fill="#32cd32"/><rect x="1428" y="318" width="2" height="21" fill="#32cd32"/><rect x="1444" y="316" width="2" height="23" fill="#32cd32"/><rect x="1460" y="314" width="2" height="25" fill="#32cd32"/><rect x="1476" y="312" width="2" height="27" fill="#32cd32"/><rect x="1492" y="321" width="2" height="18" fill="#32cd32"/><rect x="1508" y="319" width="2" height="20" fill="#32cd32"/><rect x="1524" y="317" width="2" height="22" fill="#32cd32"/><rect x="1540" y="315" width="2" height="24" fill="#32cd32"/><path d="M326 103.500 H1842" stroke="#32cd32" stroke-width="3" stroke-dasharray="3 3"/><path d="M326 107.500 H1842" stroke="#32cd32" stroke-width="1" stroke-dasharray="3 3"/><rect x="325" y="340" width="1" height="4" fill="#fff"/><rect x="389" y="340" width="1" height="4" fill="#fff"/><rect x="453" y="340" width="1" height="4" fill="#fff"/><rect x="517" y="340" width="1" height="4" fill="#fff"/><rect x="581" y="340" width="1" height="4" fill="#fff"/><rect x="645" y="340" width="1" height="4" fill="#fff"/><rect x="709" y="340" width="1" height="4" fill="#fff"/><rect x="773" y="340" width="1" height="4" fill="#fff"/><rect x="837" y="340" width="1" height="4" fill="#fff"/><rect x="901" y="340" width="1" height="4" fill="#fff"/><rect x="965" y="340" width="1" height="4" fill="#fff"/><rect x="1029" y="340" width="1" height="4" fill="#fff"/><rect x="1093" y="340" width="1" height="4" fill="#fff"/><rect x="1157" y="340" width="1" height="4" fill="#fff"/><rect x="1221" y="340" width="1" height="4" fill="#fff"/><rect x="1285" y="340" width="1" height="4" fill="#fff"/><rect x="1349" y="340" width="1" height="4" fill="#fff"/><rect x="1413" y="340" width="1" height="4" fill="#fff"/><rect x="1477" y="340" width="1" height="4" fill="#fff"/><rect x="1541" y="340" width="1" height="4" fill="#fff"/><rect x="1605" y="340" width="1" height="4" fill="#fff"/><rect x="1669" y="340" width="1" height="4" fill="#fff"/><rect x="1733" y="340" width="1" height="4" fill="#fff"/><rect x="1797" y="340" width="1" height="4" fill="#fff"/><rect x="1844" y="147" width="3" height="1" fill="#fff"/><rect x="1844" y="179" width="3" height="1" fill="#fff"/><rect x="1844" y="211" width="3" height="1" fill="#fff"/><rect x="1844" y="243" width="3" height="1" fill="#fff"/><rect x="1844" y="275" width="3" height="1" fill="#fff"/><rect x="1844" y="307" width="3" height="1" fill="#fff"/><rect x="1844" y="118" width="3" height="1" fill="#fff"/></svg>
<div class="cell" style="left:8px;top:53px;background:#ff0000"><span class="hd"><b class="cj">币种</b><i class="m" style="margin:0 -3px">buy</i></span></div>
<div class="cell" style="left:88px;top:53px;background:#00ffff"><span class="cj">手数</span></div>
<div class="cell" style="left:168px;top:53px;background:#00ffff"><span class="cj">持仓均价</span></div>
<div class="cell" style="left:248px;top:53px;background:#00ffff"><span class="cj">单次</span></div>
<div class="cell" style="left:328px;top:53px;background:#00ffff"><span class="cj">盈亏</span></div>
<div class="cell" style="left:8px;top:83px;background:#00ffff"><span><i class="m">XAUUSD</i></span></div>
<div class="cell" style="left:88px;top:83px;background:#ffffff"><span><i class="m">0.02</i></span></div>
<div class="cell" style="left:168px;top:83px;background:#ffffff"><span><i class="m">3341.13</i></span></div>
<div class="cell" style="left:248px;top:83px;background:#ffffff"><span><i class="m">2</i></span></div>
<div class="cell" style="left:328px;top:83px;background:#ffffff"><span><i class="m">-28.52</i></span></div>
<div class="cell" style="left:8px;top:113px;background:#00ffff"><span><i class="m">EURUSD</i></span></div>
<div class="cell" style="left:88px;top:113px;background:#ffffff"><span><i class="m">0.02</i></span></div>
<div class="cell" style="left:168px;top:113px;background:#ffffff"><span><i class="m">1.1341</i></span></div>
<div class="cell" style="left:248px;top:113px;background:#ffffff"><span><i class="m">1</i></span></div>
<div class="cell" style="left:328px;top:113px;background:#ffffff"><span><i class="m">-5.62</i></span></div>
<div class="cell" style="left:8px;top:143px;background:#00ffff"><span><i class="m">AUDNZD</i></span></div>
<div class="cell" style="left:88px;top:143px;background:#ffffff"><span><i class="m">0.02</i></span></div>
<div class="cell" style="left:168px;top:143px;background:#ffffff"><span><i class="m">1.08629</i></span></div>
<div class="cell" style="left:248px;top:143px;background:#ffffff"><span><i class="m">2</i></span></div>
<div class="cell" style="left:328px;top:143px;background:#ffffff"><span><i class="m">1.18</i></span></div>
<div class="cell" style="left:8px;top:173px;background:#00ffff"><span><i class="m">AUDPLN</i></span></div>
<div class="cell" style="left:88px;top:173px;background:#ffffff"><span><i class="m">0.01</i></span></div>
<div class="cell" style="left:168px;top:173px;background:#ffffff"><span><i class="m">2.63225</i></span></div>
<div class="cell" style="left:248px;top:173px;background:#ffffff"><span><i class="m">1</i></span></div>
<div class="cell" style="left:328px;top:173px;background:#ffffff"><span><i class="m">-0.28</i></span></div>
<div class="cell" style="left:8px;top:203px;background:#00ffff"><span><i class="m">AUDHKD</i></span></div>
<div class="cell" style="left:88px;top:203px;background:#ffffff"><span><i class="m">0.01</i></span></div>
<div class="cell" style="left:168px;top:203px;background:#ffffff"><span><i class="m">5.25953</i></span></div>
<div class="cell" style="left:248px;top:203px;background:#ffffff"><span><i class="m">1</i></span></div>
<div class="cell" style="left:328px;top:203px;background:#ffffff"><span><i class="m">-0.01</i></span></div>
<div class="cell" style="left:8px;top:233px;background:#00ffff"><span><i class="m">XPTUSD</i></span></div>
<div class="cell" style="left:88px;top:233px;background:#ffffff"><span><i class="m">0.2</i></span></div>
<div class="cell" style="left:168px;top:233px;background:#ffffff"><span><i class="m">1082.398</i></span></div>
<div class="cell" style="left:248px;top:233px;background:#ffffff"><span><i class="m">2</i></span></div>
<div class="cell" style="left:328px;top:233px;background:#ffffff"><span><i class="m">-0.88</i></span></div>
<div class="cell" style="left:418px;top:53px;background:#9acd32"><span class="hd"><b class="cj">币种</b><i class="m" style="margin:0 -4px">sell</i></span></div>
<div class="cell" style="left:498px;top:53px;background:#00ffff"><span class="cj">手数</span></div>
<div class="cell" style="left:578px;top:53px;background:#00ffff"><span class="cj">持仓均价</span></div>
<div class="cell" style="left:658px;top:53px;background:#00ffff"><span class="cj">单次</span></div>
<div class="cell" style="left:738px;top:53px;background:#00ffff"><span class="cj">盈亏</span></div>
<div class="cell" style="left:418px;top:83px;background:#00ffff"><span><i class="m">XAUUSD</i></span></div>
<div class="cell" style="left:498px;top:83px;background:#ffffff"><span><i class="m">1.05</i></span></div>
<div class="cell" style="left:578px;top:83px;background:#ffffff"><span><i class="m">3337.29</i></span></div>
<div class="cell" style="left:658px;top:83px;background:#ffffff"><span><i class="m">4</i></span></div>
<div class="cell" style="left:738px;top:83px;background:#ffffff"><span><i class="m">1076.41</i></span></div>
<div class="cell" style="left:418px;top:113px;background:#00ffff"><span><i class="m">EURUSD</i></span></div>
<div class="cell" style="left:498px;top:113px;background:#ffffff"><span><i class="m">0.04</i></span></div>
<div class="cell" style="left:578px;top:113px;background:#ffffff"><span><i class="m">1.13396</i></span></div>
<div class="cell" style="left:658px;top:113px;background:#ffffff"><span><i class="m">2</i></span></div>
<div class="cell" style="left:738px;top:113px;background:#ffffff"><span><i class="m">10.12</i></span></div>
<div class="cell" style="left:418px;top:143px;background:#00ffff"><span><i class="m">AUDNZD</i></span></div>
<div class="cell" style="left:498px;top:143px;background:#ffffff"><span><i class="m">0.02</i></span></div>
<div class="cell" style="left:578px;top:143px;background:#ffffff"><span><i class="m">1.08589</i></span></div>
<div class="cell" style="left:658px;top:143px;background:#ffffff"><span><i class="m">2</i></span></div>
<div class="cell" style="left:738px;top:143px;background:#ffffff"><span><i class="m">-2.08</i></span></div>
<div class="cell" style="left:418px;top:173px;background:#00ffff"><span><i class="m">AUDPLN</i></span></div>
<div class="cell" style="left:498px;top:173px;background:#ffffff"><span><i class="m">0.02</i></span></div>
<div class="cell" style="left:578px;top:173px;background:#ffffff"><span><i class="m">2.63122</i></span></div>
<div class="cell" style="left:658px;top:173px;background:#ffffff"><span><i class="m">2</i></span></div>
<div class="cell" style="left:738px;top:173px;background:#ffffff"><span><i class="m">-0.54</i></span></div>
<div class="cell" style="left:418px;top:203px;background:#00ffff"><span><i class="m">AUDHKD</i></span></div>
<div class="cell" style="left:498px;top:203px;background:#ffffff"><span><i class="m">0.0</i></span></div>
<div class="cell" style="left:578px;top:203px;background:#ffffff"><span><i class="m">0.0</i></span></div>
<div class="cell" style="left:658px;top:203px;background:#ffffff"><span><i class="m">0</i></span></div>
<div class="cell" style="left:738px;top:203px;background:#ffffff"><span><i class="m">0.0</i></span></div>
<div class="cell" style="left:418px;top:233px;background:#00ffff"><span><i class="m">XPTUSD</i></span></div>
<div class="cell" style="left:498px;top:233px;background:#ffffff"><span><i class="m">0.1</i></span></div>
<div class="cell" style="left:578px;top:233px;background:#ffffff"><span><i class="m">1080.201</i></span></div>
<div class="cell" style="left:658px;top:233px;background:#ffffff"><span><i class="m">1</i></span></div>
<div class="cell" style="left:738px;top:233px;background:#ffffff"><span><i class="m">0.0</i></span></div>
<div class="cell" style="left:828px;top:53px;background:#ffff00"><span class="hd"><b class="cj">币种</b><i class="m" style="margin:0 -3px">all</i></span></div>
<div class="cell" style="left:908px;top:53px;background:#00ffff"><span class="cj">手数</span></div>
<div class="cell" style="left:988px;top:53px;background:#00ffff"><span class="cj">持仓均价</span></div>
<div class="cell" style="left:1068px;top:53px;background:#00ffff"><span class="cj">单次</span></div>
<div class="cell" style="left:1148px;top:53px;background:#00ffff"><span class="cj">盈亏</span></div>
<div class="cell" style="left:828px;top:83px;background:#00ffff"><span><i class="m">XAUUSD</i></span></div>
<div class="cell" style="left:908px;top:83px;background:#ffffff"><span><i class="m">1.07</i></span></div>
<div class="cell" style="left:988px;top:83px;background:#ffffff"><span><i class="m">3337.22</i></span></div>
<div class="cell" style="left:1068px;top:83px;background:#ffffff"><span><i class="m">6</i></span></div>
<div class="cell" style="left:1148px;top:83px;background:#ffffff"><span><i class="m">1047.89</i></span></div>
<div class="cell" style="left:828px;top:113px;background:#00ffff"><span><i class="m">EURUSD</i></span></div>
<div class="cell" style="left:908px;top:113px;background:#ffffff"><span><i class="m">0.06</i></span></div>
<div class="cell" style="left:988px;top:113px;background:#ffffff"><span><i class="m">1.13382</i></span></div>
<div class="cell" style="left:1068px;top:113px;background:#ffffff"><span><i class="m">3</i></span></div>
<div class="cell" style="left:1148px;top:113px;background:#ffffff"><span><i class="m">4.5</i></span></div>
<div class="cell" style="left:828px;top:143px;background:#00ffff"><span><i class="m">AUDNZD</i></span></div>
<div class="cell" style="left:908px;top:143px;background:#ffffff"><span><i class="m">0.04</i></span></div>
<div class="cell" style="left:988px;top:143px;background:#ffffff"><span><i class="m">0.0</i></span></div>
<div class="cell" style="left:1068px;top:143px;background:#ffffff"><span><i class="m">4</i></span></div>
<div class="cell" style="left:1148px;top:143px;background:#ffffff"><span><i class="m">-0.9</i></span></div>
<div class="cell" style="left:828px;top:173px;background:#00ffff"><span><i class="m">AUDPLN</i></span></div>
<div class="cell" style="left:908px;top:173px;background:#ffffff"><span><i class="m">0.03</i></span></div>
<div class="cell" style="left:988px;top:173px;background:#ffffff"><span><i class="m">2.63019</i></span></div>
<div class="cell" style="left:1068px;top:173px;background:#ffffff"><span><i class="m">3</i></span></div>
<div class="cell" style="left:1148px;top:173px;background:#ffffff"><span><i class="m">-0.82</i></span></div>
<div class="cell" style="left:828px;top:203px;background:#00ffff"><span><i class="m">AUDHKD</i></span></div>
<div class="cell" style="left:908px;top:203px;background:#ffffff"><span><i class="m">0.01</i></span></div>
<div class="cell" style="left:988px;top:203px;background:#ffffff"><span><i class="m">5.25953</i></span></div>
<div class="cell" style="left:1068px;top:203px;background:#ffffff"><span><i class="m">1</i></span></div>
<div class="cell" style="left:1148px;top:203px;background:#ffffff"><span><i class="m">-0.01</i></span></div>
<div class="cell" style="left:828px;top:233px;background:#00ffff"><span><i class="m">XPTUSD</i></span></div>
<div class="cell" style="left:908px;top:233px;background:#ffffff"><span><i class="m">0.3</i></span></div>
<div class="cell" style="left:988px;top:233px;background:#ffffff"><span><i class="m">1084.595</i></span></div>
<div class="cell" style="left:1068px;top:233px;background:#ffffff"><span><i class="m">3</i></span></div>
<div class="cell" style="left:1148px;top:233px;background:#ffffff"><span><i class="m">-0.88</i></span></div>
<div class="a" style="left:3px;top:154px;width:5px;height:4px;background:#fff;border-top:1px solid #00ff00;border-bottom:1px solid #00ff00;box-sizing:border-box"></div>
<div class="a" style="left:413px;top:125px;width:5px;height:4px;background:#fff;border:1px solid #00ff00;box-sizing:border-box"></div>
<div class="a" style="left:818px;top:128px;width:6px;height:8px;border:1px solid #00ff00;border-left:0;box-sizing:border-box"></div>
<div class="a" style="left:1228px;top:241px;width:1px;height:14px;background:#32cd32"></div>
<div class="a" style="left:0;top:256px;width:1573px;height:20px;background:#000"></div>
<div class="a" style="left:3px;top:255px;width:1518px;height:1px;background:#fff"></div>
<svg style="left:0;top:0" width="1573" height="276" viewBox="323 84 1573 276" fill="none" shape-rendering="crispEdges"><rect x="325" y="340" width="1" height="4" fill="#fff"/><rect x="389" y="340" width="1" height="4" fill="#fff"/><rect x="453" y="340" width="1" height="4" fill="#fff"/><rect x="517" y="340" width="1" height="4" fill="#fff"/><rect x="581" y="340" width="1" height="4" fill="#fff"/><rect x="645" y="340" width="1" height="4" fill="#fff"/><rect x="709" y="340" width="1" height="4" fill="#fff"/><rect x="773" y="340" width="1" height="4" fill="#fff"/><rect x="837" y="340" width="1" height="4" fill="#fff"/><rect x="901" y="340" width="1" height="4" fill="#fff"/><rect x="965" y="340" width="1" height="4" fill="#fff"/><rect x="1029" y="340" width="1" height="4" fill="#fff"/><rect x="1093" y="340" width="1" height="4" fill="#fff"/><rect x="1157" y="340" width="1" height="4" fill="#fff"/><rect x="1221" y="340" width="1" height="4" fill="#fff"/><rect x="1285" y="340" width="1" height="4" fill="#fff"/><rect x="1349" y="340" width="1" height="4" fill="#fff"/><rect x="1413" y="340" width="1" height="4" fill="#fff"/><rect x="1477" y="340" width="1" height="4" fill="#fff"/><rect x="1541" y="340" width="1" height="4" fill="#fff"/><rect x="1605" y="340" width="1" height="4" fill="#fff"/><rect x="1669" y="340" width="1" height="4" fill="#fff"/><rect x="1733" y="340" width="1" height="4" fill="#fff"/><rect x="1797" y="340" width="1" height="4" fill="#fff"/></svg>
<div class="t ax tm" style="left:2px;top:261px">16 May 2025</div>
<div class="t ax tm" style="left:66px;top:261px">16 May 13:00</div>
<div class="t ax tm" style="left:130px;top:261px">16 May 17:00</div>
<div class="t ax tm" style="left:194px;top:261px">16 May 21:00</div>
<div class="t ax tm" style="left:258px;top:261px">19 May 02:00</div>
<div class="t ax tm" style="left:322px;top:261px">19 May 06:00</div>
<div class="t ax tm" style="left:386px;top:261px">19 May 10:00</div>
<div class="t ax tm" style="left:450px;top:261px">19 May 14:00</div>
<div class="t ax tm" style="left:514px;top:261px">19 May 18:00</div>
<div class="t ax tm" style="left:578px;top:261px">19 May 22:00</div>
<div class="t ax tm" style="left:642px;top:261px">20 May 03:00</div>
<div class="t ax tm" style="left:706px;top:261px">20 May 07:00</div>
<div class="t ax tm" style="left:770px;top:261px">20 May 11:00</div>
<div class="t ax tm" style="left:834px;top:261px">20 May 15:00</div>
<div class="t ax tm" style="left:898px;top:261px">20 May 19:00</div>
<div class="t ax tm" style="left:962px;top:261px">20 May 23:00</div>
<div class="t ax tm" style="left:1026px;top:261px">21 May 04:00</div>
<div class="t ax tm" style="left:1090px;top:261px">21 May 08:00</div>
<div class="t ax tm" style="left:1154px;top:261px">21 May 12:00</div>
<div class="t ax tm" style="left:1218px;top:261px">21 May 16:00</div>
<div class="t ax tm" style="left:1282px;top:261px">21 May 20:00</div>
<div class="t ax tm" style="left:1346px;top:261px">22 May 01:00</div>
<div class="t ax tm" style="left:1410px;top:261px">22 May 05:00</div>
<div class="t ax tm" style="left:1474px;top:261px">22 May 09:00</div>
<div class="t ax" style="left:1525px;top:59px">3300.82</div>
<div class="t ax" style="left:1525px;top:91px">3271.71</div>
<div class="t ax" style="left:1525px;top:123px">3242.60</div>
<div class="t ax" style="left:1525px;top:155px">3213.49</div>
<div class="t ax" style="left:1525px;top:187px">3184.38</div>
<div class="t ax" style="left:1525px;top:219px">3155.27</div>
<div class="t ax" style="left:1525px;top:28px">3331.87</div>
<div class="a" style="left:1523px;top:29px;width:39px;height:11px;background:#8c9cb4"></div>
<div class="t ax" style="left:1525px;top:30px;color:#000">3326.87</div>
<svg style="left:1405px;top:9px" width="30" height="26" viewBox="0 0 30 26"><rect x="1" y="0.5" width="9.5" height="10.5" rx="2.5" fill="#fff"/><path d="M5.700 10 L2.200 6 H4.500 V3.200 H7 V6 H9.300 Z" fill="#f04020"/><rect x="3.500" y="1.300" width="4.500" height="1.200" fill="#f04020"/><rect x="1" y="11.500" width="9.500" height="10.500" rx="2.500" fill="#fff"/><path d="M5.700 12 L2 16.500 H4.500 V19.500 H7 V16.500 H9.500 Z" fill="#1060c0"/><rect x="16" y="10.500" width="11" height="7.500" rx="1.500" fill="#fff"/><path d="M21.500 10.700 L17.500 15 H20 V17.500 H23 V15 H25.500 Z" fill="#1060c0"/></svg>
<svg style="left:8px;top:8px" width="90" height="12" viewBox="0 0 90 12"><rect x="0.500" y="0.500" width="7" height="10" fill="#fff" stroke="#e03020" stroke-width="1"/><path d="M2 3 H6 M2 5.500 H6 M2 8 H6" stroke="#e03020" stroke-width="1"/><rect x="7.500" y="0.500" width="7" height="10" fill="#fff" stroke="#1060c0" stroke-width="1"/><path d="M9 3 H13 M9 5.500 H13 M9 8 H13" stroke="#1060c0" stroke-width="1"/><rect x="21.500" y="0.500" width="6" height="10" fill="#ffd0c8" stroke="#e03020" stroke-width="1"/><rect x="29.500" y="1.500" width="6" height="10" fill="#a8d0f0" stroke="#1060c0" stroke-width="1"/></svg>
<div class="t ax" style="left:45px;top:8px;font-size:10.5px;font-weight:bold;letter-spacing:0.1px;opacity:1">XAUUSD,</div>
<div class="t ax" style="left:47px;top:9px;font-size:10.5px;font-weight:bold;letter-spacing:0.1px;opacity:0.8">XAUUSD,</div>
<div class="t ax" style="left:43px;top:8px;font-size:10.5px;font-weight:bold;letter-spacing:0.1px;opacity:0.7">XAUUSD,</div>
<div class="t ax" style="left:46px;top:7px;font-size:10.5px;font-weight:bold;letter-spacing:0.1px;opacity:0.6">XAUUSD,</div>
<div class="t ax" id="ctitle2" style="left:94px;top:8px;font-size:10.5px;letter-spacing:-0.55px;word-spacing:0.3px">H1:&nbsp; Gold vs US Dollar</div>
</div>
<div class="a" style="left:1896px;top:84px;width:2px;height:276px;background:#f0f0f0"></div>
<div class="a" style="left:321px;top:84px;width:2px;height:276px;background:#f0f0f0"></div>
<div class="a" style="left:0;top:360px;width:1898px;height:6px;background:#f0f0f0"></div>
<div class="a" style="left:0;top:365px;width:1896px;height:1px;background:#a0a0a0"></div>
<div class="a" id="tt">
<div class="a" style="left:0;top:0;width:1894px;height:23px;background:#fff"></div>
<div class="a" style="left:160px;top:1px;width:1px;height:22px;background:#e5e5e5"></div>
<div class="a" style="left:273px;top:1px;width:1px;height:22px;background:#e5e5e5"></div>
<div class="a" style="left:413px;top:1px;width:1px;height:22px;background:#e5e5e5"></div>
<div class="a" style="left:538px;top:1px;width:1px;height:22px;background:#e5e5e5"></div>
<div class="a" style="left:663px;top:1px;width:1px;height:22px;background:#e5e5e5"></div>
<div class="a" style="left:788px;top:1px;width:1px;height:22px;background:#e5e5e5"></div>
<div class="a" style="left:913px;top:1px;width:1px;height:22px;background:#e5e5e5"></div>
<div class="a" style="left:1038px;top:1px;width:1px;height:22px;background:#e5e5e5"></div>
<div class="a" style="left:1163px;top:1px;width:1px;height:22px;background:#e5e5e5"></div>
<div class="a" style="left:1288px;top:1px;width:1px;height:22px;background:#e5e5e5"></div>
<div class="a" style="left:1426px;top:1px;width:1px;height:22px;background:#e5e5e5"></div>
<div class="a" style="left:1546px;top:1px;width:1px;height:22px;background:#e5e5e5"></div>
<div class="a" style="left:1894px;top:1px;width:1px;height:22px;background:#e5e5e5"></div>
<div class="t k" style="left:4px;top:6.5px">交易品种</div>
<div class="t k" style="left:166px;top:6.5px">订单号</div>
<div class="t k" style="left:279px;top:6.5px;width:100px;text-align:right">时间</div>
<div class="t k" style="left:434px;top:6.5px;width:100px;text-align:right">类型</div>
<div class="t k" style="left:559px;top:6.5px;width:100px;text-align:right">交易量</div>
<div class="t k" style="left:684px;top:6.5px;width:100px;text-align:right">价位</div>
<div class="t k" style="left:809px;top:6.5px;width:100px;text-align:right">止损</div>
<div class="t k" style="left:934px;top:6.5px;width:100px;text-align:right">止盈</div>
<div class="t k" style="left:1059px;top:6.5px;width:100px;text-align:right">价位</div>
<div class="t k" style="left:1184px;top:6.5px;width:100px;text-align:right">库存费</div>
<div class="t k" style="left:1321px;top:6.5px;width:100px;text-align:right">盈利</div>
<div class="t k" style="left:1442px;top:6.5px;width:100px;text-align:right">幻数</div>
<div class="t k" style="left:1789px;top:6.5px;width:100px;text-align:right">注释</div>
<svg style="left:396px;top:9.5px" width="8" height="5" viewBox="0 0 8 5"><path d="M0 5 L4 0.5 L8 5Z" fill="#000"/></svg>
<div class="tr" style="top:24px">
<svg style="left:2px;top:3px" width="12" height="15" viewBox="0 0 12 15"><rect x="0.600" y="0.600" width="10" height="13.5" rx="2" fill="#fff" stroke="#d83b32" stroke-width="1.2"/><path d="M4 5.500 H7 M4 8.500 H7" stroke="#d83b32" stroke-width="1.1"/></svg>
<div class="c" style="left:19px;letter-spacing:0.1px">xauusd</div>
<div class="c" style="left:164px">52563759422</div>
<div class="c r " style="left:273px;width:137px">2025.05.22 05:31:35</div>
<div class="c r " style="left:413px;width:122px">sell</div>
<div class="c r " style="left:538px;width:122px">1</div>
<div class="c r " style="left:663px;width:122px">3337.21</div>
<div class="c r " style="left:1038px;width:122px">3327.04</div>
<div class="c r blue" style="left:1288px;width:116px">1 017.00</div>
<svg style="left:1412px;top:6px" width="9" height="9" viewBox="0 0 9 9"><path d="M1 1 L8 8 M8 1 L1 8" stroke="#858585" stroke-width="1.9" fill="none"/></svg>
<div class="v" style="left:160px"></div>
<div class="v" style="left:273px"></div>
<div class="v" style="left:413px"></div>
<div class="v" style="left:538px"></div>
<div class="v" style="left:663px"></div>
<div class="v" style="left:788px"></div>
<div class="v" style="left:913px"></div>
<div class="v" style="left:1038px"></div>
<div class="v" style="left:1163px"></div>
<div class="v" style="left:1288px"></div>
<div class="v" style="left:1426px"></div>
<div class="v" style="left:1546px"></div>
</div>
<div class="tr g" style="top:45px">
<svg style="left:2px;top:3px" width="12" height="15" viewBox="0 0 12 15"><rect x="0.600" y="0.600" width="10" height="13.5" rx="2" fill="#fff" stroke="#d83b32" stroke-width="1.2"/><path d="M4 5.500 H7 M4 8.500 H7" stroke="#d83b32" stroke-width="1.1"/></svg>
<div class="c" style="left:19px;letter-spacing:0.1px">xauusd</div>
<div class="c" style="left:164px">52563761225</div>
<div class="c r " style="left:273px;width:137px">2025.05.22 05:32:14</div>
<div class="c r " style="left:413px;width:122px">sell</div>
<div class="c r " style="left:538px;width:122px">0.02</div>
<div class="c r " style="left:663px;width:122px">3337.58</div>
<div class="c r " style="left:1038px;width:122px">3327.04</div>
<div class="c r blue" style="left:1288px;width:116px">21.08</div>
<svg style="left:1412px;top:6px" width="9" height="9" viewBox="0 0 9 9"><path d="M1 1 L8 8 M8 1 L1 8" stroke="#858585" stroke-width="1.9" fill="none"/></svg>
<div class="v" style="left:160px"></div>
<div class="v" style="left:273px"></div>
<div class="v" style="left:413px"></div>
<div class="v" style="left:538px"></div>
<div class="v" style="left:663px"></div>
<div class="v" style="left:788px"></div>
<div class="v" style="left:913px"></div>
<div class="v" style="left:1038px"></div>
<div class="v" style="left:1163px"></div>
<div class="v" style="left:1288px"></div>
<div class="v" style="left:1426px"></div>
<div class="v" style="left:1546px"></div>
</div>
<div class="tr" style="top:66px">
<svg style="left:2px;top:3px" width="12" height="15" viewBox="0 0 12 15"><rect x="0.600" y="0.600" width="10" height="13.5" rx="2" fill="#fff" stroke="#d83b32" stroke-width="1.2"/><path d="M4 5.500 H7 M4 8.500 H7" stroke="#d83b32" stroke-width="1.1"/></svg>
<div class="c" style="left:19px;letter-spacing:0.1px">xauusd</div>
<div class="c" style="left:164px">52563769384</div>
<div class="c r " style="left:273px;width:137px">2025.05.22 05:35:26</div>
<div class="c r " style="left:413px;width:122px">sell</div>
<div class="c r " style="left:538px;width:122px">0.02</div>
<div class="c r " style="left:663px;width:122px">3339.53</div>
<div class="c r " style="left:1038px;width:122px">3327.04</div>
<div class="c r blue" style="left:1288px;width:116px">24.98</div>
<svg style="left:1412px;top:6px" width="9" height="9" viewBox="0 0 9 9"><path d="M1 1 L8 8 M8 1 L1 8" stroke="#858585" stroke-width="1.9" fill="none"/></svg>
<div class="v" style="left:160px"></div>
<div class="v" style="left:273px"></div>
<div class="v" style="left:413px"></div>
<div class="v" style="left:538px"></div>
<div class="v" style="left:663px"></div>
<div class="v" style="left:788px"></div>
<div class="v" style="left:913px"></div>
<div class="v" style="left:1038px"></div>
<div class="v" style="left:1163px"></div>
<div class="v" style="left:1288px"></div>
<div class="v" style="left:1426px"></div>
<div class="v" style="left:1546px"></div>
</div>
<div class="tr g" style="top:87px">
<svg style="left:2px;top:3px" width="12" height="15" viewBox="0 0 12 15"><rect x="0.600" y="0.600" width="10" height="13.5" rx="2" fill="#fff" stroke="#d83b32" stroke-width="1.2"/><path d="M4 5.500 H7 M4 8.500 H7" stroke="#d83b32" stroke-width="1.1"/></svg>
<div class="c" style="left:19px;letter-spacing:0.24px">eurusd</div>
<div class="c" style="left:164px">52563769602</div>
<div class="c r " style="left:273px;width:137px">2025.05.22 05:35:34</div>
<div class="c r " style="left:413px;width:122px">sell</div>
<div class="c r " style="left:538px;width:122px">0.02</div>
<div class="c r " style="left:663px;width:122px">1.13397</div>
<div class="c r " style="left:1038px;width:122px">1.13143</div>
<div class="c r blue" style="left:1288px;width:116px">5.08</div>
<svg style="left:1412px;top:6px" width="9" height="9" viewBox="0 0 9 9"><path d="M1 1 L8 8 M8 1 L1 8" stroke="#858585" stroke-width="1.9" fill="none"/></svg>
<div class="v" style="left:160px"></div>
<div class="v" style="left:273px"></div>
<div class="v" style="left:413px"></div>
<div class="v" style="left:538px"></div>
<div class="v" style="left:663px"></div>
<div class="v" style="left:788px"></div>
<div class="v" style="left:913px"></div>
<div class="v" style="left:1038px"></div>
<div class="v" style="left:1163px"></div>
<div class="v" style="left:1288px"></div>
<div class="v" style="left:1426px"></div>
<div class="v" style="left:1546px"></div>
</div>
<div class="tr" style="top:108px">
<svg style="left:2px;top:3px" width="12" height="15" viewBox="0 0 12 15"><rect x="0.600" y="0.600" width="10" height="13.5" rx="2" fill="#fff" stroke="#d83b32" stroke-width="1.2"/><path d="M4 5.500 H7 M4 8.500 H7" stroke="#d83b32" stroke-width="1.1"/></svg>
<div class="c" style="left:19px;letter-spacing:0.24px">eurusd</div>
<div class="c" style="left:164px">52563769622</div>
<div class="c r " style="left:273px;width:137px">2025.05.22 05:35:35</div>
<div class="c r " style="left:413px;width:122px">sell</div>
<div class="c r " style="left:538px;width:122px">0.02</div>
<div class="c r " style="left:663px;width:122px">1.13395</div>
<div class="c r " style="left:1038px;width:122px">1.13143</div>
<div class="c r blue" style="left:1288px;width:116px">5.04</div>
<svg style="left:1412px;top:6px" width="9" height="9" viewBox="0 0 9 9"><path d="M1 1 L8 8 M8 1 L1 8" stroke="#858585" stroke-width="1.9" fill="none"/></svg>
<div class="v" style="left:160px"></div>
<div class="v" style="left:273px"></div>
<div class="v" style="left:413px"></div>
<div class="v" style="left:538px"></div>
<div class="v" style="left:663px"></div>
<div class="v" style="left:788px"></div>
<div class="v" style="left:913px"></div>
<div class="v" style="left:1038px"></div>
<div class="v" style="left:1163px"></div>
<div class="v" style="left:1288px"></div>
<div class="v" style="left:1426px"></div>
<div class="v" style="left:1546px"></div>
</div>
<div class="tr g" style="top:129px">
<svg style="left:2px;top:3px" width="12" height="15" viewBox="0 0 12 15"><rect x="0.600" y="0.600" width="10" height="13.5" rx="2" fill="#fff" stroke="#1b6ab0" stroke-width="1.2"/><path d="M4 5.500 H7 M4 8.500 H7" stroke="#1b6ab0" stroke-width="1.1"/></svg>
<div class="c" style="left:19px;letter-spacing:0.24px">eurusd</div>
<div class="c" style="left:164px">52563769655</div>
<div class="c r " style="left:273px;width:137px">2025.05.22 05:35:36</div>
<div class="c r " style="left:413px;width:122px">buy</div>
<div class="c r " style="left:538px;width:122px">0.02</div>
<div class="c r " style="left:663px;width:122px">1.13410</div>
<div class="c r " style="left:1038px;width:122px">1.13129</div>
<div class="c r red" style="left:1288px;width:116px">-5.62</div>
<svg style="left:1412px;top:6px" width="9" height="9" viewBox="0 0 9 9"><path d="M1 1 L8 8 M8 1 L1 8" stroke="#858585" stroke-width="1.9" fill="none"/></svg>
<div class="v" style="left:160px"></div>
<div class="v" style="left:273px"></div>
<div class="v" style="left:413px"></div>
<div class="v" style="left:538px"></div>
<div class="v" style="left:663px"></div>
<div class="v" style="left:788px"></div>
<div class="v" style="left:913px"></div>
<div class="v" style="left:1038px"></div>
<div class="v" style="left:1163px"></div>
<div class="v" style="left:1288px"></div>
<div class="v" style="left:1426px"></div>
<div class="v" style="left:1546px"></div>
</div>
<div class="tr" style="top:150px">
<svg style="left:2px;top:3px" width="12" height="15" viewBox="0 0 12 15"><rect x="0.600" y="0.600" width="10" height="13.5" rx="2" fill="#fff" stroke="#1b6ab0" stroke-width="1.2"/><path d="M4 5.500 H7 M4 8.500 H7" stroke="#1b6ab0" stroke-width="1.1"/></svg>
<div class="c" style="left:19px;letter-spacing:0.5px">audnzd</div>
<div class="c" style="left:164px">52563770093</div>
<div class="c r " style="left:273px;width:137px">2025.05.22 05:35:48</div>
<div class="c r " style="left:413px;width:122px">buy</div>
<div class="c r " style="left:538px;width:122px">0.01</div>
<div class="c r " style="left:663px;width:122px">1.08629</div>
<div class="c r " style="left:1038px;width:122px">1.08728</div>
<div class="c r blue" style="left:1288px;width:116px">0.59</div>
<svg style="left:1412px;top:6px" width="9" height="9" viewBox="0 0 9 9"><path d="M1 1 L8 8 M8 1 L1 8" stroke="#858585" stroke-width="1.9" fill="none"/></svg>
<div class="v" style="left:160px"></div>
<div class="v" style="left:273px"></div>
<div class="v" style="left:413px"></div>
<div class="v" style="left:538px"></div>
<div class="v" style="left:663px"></div>
<div class="v" style="left:788px"></div>
<div class="v" style="left:913px"></div>
<div class="v" style="left:1038px"></div>
<div class="v" style="left:1163px"></div>
<div class="v" style="left:1288px"></div>
<div class="v" style="left:1426px"></div>
<div class="v" style="left:1546px"></div>
</div>
<div class="tr g" style="top:171px">
<svg style="left:2px;top:3px" width="12" height="15" viewBox="0 0 12 15"><rect x="0.600" y="0.600" width="10" height="13.5" rx="2" fill="#fff" stroke="#d83b32" stroke-width="1.2"/><path d="M4 5.500 H7 M4 8.500 H7" stroke="#d83b32" stroke-width="1.1"/></svg>
<div class="c" style="left:19px;letter-spacing:0.5px">audnzd</div>
<div class="c" style="left:164px">52563770112</div>
<div class="c r " style="left:273px;width:137px">2025.05.22 05:35:49</div>
<div class="c r " style="left:413px;width:122px">sell</div>
<div class="c r " style="left:538px;width:122px">0.01</div>
<div class="c r " style="left:663px;width:122px">1.08589</div>
<div class="c r " style="left:1038px;width:122px">1.08764</div>
<div class="c r red" style="left:1288px;width:116px">-1.04</div>
<svg style="left:1412px;top:6px" width="9" height="9" viewBox="0 0 9 9"><path d="M1 1 L8 8 M8 1 L1 8" stroke="#858585" stroke-width="1.9" fill="none"/></svg>
<div class="v" style="left:160px"></div>
<div class="v" style="left:273px"></div>
<div class="v" style="left:413px"></div>
<div class="v" style="left:538px"></div>
<div class="v" style="left:663px"></div>
<div class="v" style="left:788px"></div>
<div class="v" style="left:913px"></div>
<div class="v" style="left:1038px"></div>
<div class="v" style="left:1163px"></div>
<div class="v" style="left:1288px"></div>
<div class="v" style="left:1426px"></div>
<div class="v" style="left:1546px"></div>
</div>
<div class="tr" style="top:192px">
<svg style="left:2px;top:3px" width="12" height="15" viewBox="0 0 12 15"><rect x="0.600" y="0.600" width="10" height="13.5" rx="2" fill="#fff" stroke="#d83b32" stroke-width="1.2"/><path d="M4 5.500 H7 M4 8.500 H7" stroke="#d83b32" stroke-width="1.1"/></svg>
<div class="c" style="left:19px;letter-spacing:0.5px">audnzd</div>
<div class="c" style="left:164px">52563770129</div>
<div class="c r " style="left:273px;width:137px">2025.05.22 05:35:49</div>
<div class="c r " style="left:413px;width:122px">sell</div>
<div class="c r " style="left:538px;width:122px">0.01</div>
<div class="c r " style="left:663px;width:122px">1.08589</div>
<div class="c r " style="left:1038px;width:122px">1.08764</div>
<div class="c r red" style="left:1288px;width:116px">-1.04</div>
<svg style="left:1412px;top:6px" width="9" height="9" viewBox="0 0 9 9"><path d="M1 1 L8 8 M8 1 L1 8" stroke="#858585" stroke-width="1.9" fill="none"/></svg>
<div class="v" style="left:160px"></div>
<div class="v" style="left:273px"></div>
<div class="v" style="left:413px"></div>
<div class="v" style="left:538px"></div>
<div class="v" style="left:663px"></div>
<div class="v" style="left:788px"></div>
<div class="v" style="left:913px"></div>
<div class="v" style="left:1038px"></div>
<div class="v" style="left:1163px"></div>
<div class="v" style="left:1288px"></div>
<div class="v" style="left:1426px"></div>
<div class="v" style="left:1546px"></div>
</div>
<div class="tr g" style="top:213px">
<svg style="left:2px;top:3px" width="12" height="15" viewBox="0 0 12 15"><rect x="0.600" y="0.600" width="10" height="13.5" rx="2" fill="#fff" stroke="#1b6ab0" stroke-width="1.2"/><path d="M4 5.500 H7 M4 8.500 H7" stroke="#1b6ab0" stroke-width="1.1"/></svg>
<div class="c" style="left:19px;letter-spacing:0.5px">audnzd</div>
<div class="c" style="left:164px">52563770139</div>
<div class="c r " style="left:273px;width:137px">2025.05.22 05:35:50</div>
<div class="c r " style="left:413px;width:122px">buy</div>
<div class="c r " style="left:538px;width:122px">0.01</div>
<div class="c r " style="left:663px;width:122px">1.08629</div>
<div class="c r " style="left:1038px;width:122px">1.08728</div>
<div class="c r blue" style="left:1288px;width:116px">0.59</div>
<svg style="left:1412px;top:6px" width="9" height="9" viewBox="0 0 9 9"><path d="M1 1 L8 8 M8 1 L1 8" stroke="#858585" stroke-width="1.9" fill="none"/></svg>
<div class="v" style="left:160px"></div>
<div class="v" style="left:273px"></div>
<div class="v" style="left:413px"></div>
<div class="v" style="left:538px"></div>
<div class="v" style="left:663px"></div>
<div class="v" style="left:788px"></div>
<div class="v" style="left:913px"></div>
<div class="v" style="left:1038px"></div>
<div class="v" style="left:1163px"></div>
<div class="v" style="left:1288px"></div>
<div class="v" style="left:1426px"></div>
<div class="v" style="left:1546px"></div>
</div>
<div class="tr" style="top:234px">
<svg style="left:2px;top:3px" width="12" height="15" viewBox="0 0 12 15"><rect x="0.600" y="0.600" width="10" height="13.5" rx="2" fill="#fff" stroke="#1b6ab0" stroke-width="1.2"/><path d="M4 5.500 H7 M4 8.500 H7" stroke="#1b6ab0" stroke-width="1.1"/></svg>
<div class="c" style="left:19px;letter-spacing:0.58px">audpln</div>
<div class="c" style="left:164px">52563770321</div>
<div class="c r " style="left:273px;width:137px">2025.05.22 05:35:56</div>
<div class="c r " style="left:413px;width:122px">buy</div>
<div class="c r " style="left:538px;width:122px">0.01</div>
<div class="c r " style="left:663px;width:122px">2.63225</div>
<div class="c r " style="left:1038px;width:122px">2.63122</div>
<div class="c r red" style="left:1288px;width:116px">-0.28</div>
<svg style="left:1412px;top:6px" width="9" height="9" viewBox="0 0 9 9"><path d="M1 1 L8 8 M8 1 L1 8" stroke="#858585" stroke-width="1.9" fill="none"/></svg>
<div class="v" style="left:160px"></div>
<div class="v" style="left:273px"></div>
<div class="v" style="left:413px"></div>
<div class="v" style="left:538px"></div>
<div class="v" style="left:663px"></div>
<div class="v" style="left:788px"></div>
<div class="v" style="left:913px"></div>
<div class="v" style="left:1038px"></div>
<div class="v" style="left:1163px"></div>
<div class="v" style="left:1288px"></div>
<div class="v" style="left:1426px"></div>
<div class="v" style="left:1546px"></div>
</div>
<div class="tr g" style="top:255px">
<svg style="left:2px;top:3px" width="12" height="15" viewBox="0 0 12 15"><rect x="0.600" y="0.600" width="10" height="13.5" rx="2" fill="#fff" stroke="#d83b32" stroke-width="1.2"/><path d="M4 5.500 H7 M4 8.500 H7" stroke="#d83b32" stroke-width="1.1"/></svg>
<div class="c" style="left:19px;letter-spacing:0.58px">audpln</div>
<div class="c" style="left:164px">52563770328</div>
<div class="c r " style="left:273px;width:137px">2025.05.22 05:35:56</div>
<div class="c r " style="left:413px;width:122px">sell</div>
<div class="c r " style="left:538px;width:122px">0.01</div>
<div class="c r " style="left:663px;width:122px">2.63122</div>
<div class="c r " style="left:1038px;width:122px">2.63225</div>
<div class="c r red" style="left:1288px;width:116px">-0.27</div>
<svg style="left:1412px;top:6px" width="9" height="9" viewBox="0 0 9 9"><path d="M1 1 L8 8 M8 1 L1 8" stroke="#858585" stroke-width="1.9" fill="none"/></svg>
<div class="v" style="left:160px"></div>
<div class="v" style="left:273px"></div>
<div class="v" style="left:413px"></div>
<div class="v" style="left:538px"></div>
<div class="v" style="left:663px"></div>
<div class="v" style="left:788px"></div>
<div class="v" style="left:913px"></div>
<div class="v" style="left:1038px"></div>
<div class="v" style="left:1163px"></div>
<div class="v" style="left:1288px"></div>
<div class="v" style="left:1426px"></div>
<div class="v" style="left:1546px"></div>
</div>
<div class="tr" style="top:276px">
<svg style="left:2px;top:3px" width="12" height="15" viewBox="0 0 12 15"><rect x="0.600" y="0.600" width="10" height="13.5" rx="2" fill="#fff" stroke="#d83b32" stroke-width="1.2"/><path d="M4 5.500 H7 M4 8.500 H7" stroke="#d83b32" stroke-width="1.1"/></svg>
<div class="c" style="left:19px;letter-spacing:0.58px">audpln</div>
<div class="c" style="left:164px">52563770344</div>
<div class="c r " style="left:273px;width:137px">2025.05.22 05:35:57</div>
<div class="c r " style="left:413px;width:122px">sell</div>
<div class="c r " style="left:538px;width:122px">0.01</div>
<div class="c r " style="left:663px;width:122px">2.63122</div>
<div class="c r " style="left:1038px;width:122px">2.63225</div>
<div class="c r red" style="left:1288px;width:116px">-0.27</div>
<svg style="left:1412px;top:6px" width="9" height="9" viewBox="0 0 9 9"><path d="M1 1 L8 8 M8 1 L1 8" stroke="#858585" stroke-width="1.9" fill="none"/></svg>
<div class="v" style="left:160px"></div>
<div class="v" style="left:273px"></div>
<div class="v" style="left:413px"></div>
<div class="v" style="left:538px"></div>
<div class="v" style="left:663px"></div>
<div class="v" style="left:788px"></div>
<div class="v" style="left:913px"></div>
<div class="v" style="left:1038px"></div>
<div class="v" style="left:1163px"></div>
<div class="v" style="left:1288px"></div>
<div class="v" style="left:1426px"></div>
<div class="v" style="left:1546px"></div>
</div>
<div class="tr g" style="top:297px">
<svg style="left:2px;top:3px" width="12" height="15" viewBox="0 0 12 15"><rect x="0.600" y="0.600" width="10" height="13.5" rx="2" fill="#fff" stroke="#1b6ab0" stroke-width="1.2"/><path d="M4 5.500 H7 M4 8.500 H7" stroke="#1b6ab0" stroke-width="1.1"/></svg>
<div class="c" style="left:19px;letter-spacing:0.8px">audhkd</div>
<div class="c" style="left:164px">52563773436</div>
<div class="c r " style="left:273px;width:137px">2025.05.22 05:37:05</div>
<div class="c r " style="left:413px;width:122px">buy</div>
<div class="c r " style="left:538px;width:122px">0.01</div>
<div class="c r " style="left:663px;width:122px">5.25953</div>
<div class="c r " style="left:1038px;width:122px">5.25944</div>
<div class="c r red" style="left:1288px;width:116px">-0.01</div>
<svg style="left:1412px;top:6px" width="9" height="9" viewBox="0 0 9 9"><path d="M1 1 L8 8 M8 1 L1 8" stroke="#858585" stroke-width="1.9" fill="none"/></svg>
<div class="v" style="left:160px"></div>
<div class="v" style="left:273px"></div>
<div class="v" style="left:413px"></div>
<div class="v" style="left:538px"></div>
<div class="v" style="left:663px"></div>
<div class="v" style="left:788px"></div>
<div class="v" style="left:913px"></div>
<div class="v" style="left:1038px"></div>
<div class="v" style="left:1163px"></div>
<div class="v" style="left:1288px"></div>
<div class="v" style="left:1426px"></div>
<div class="v" style="left:1546px"></div>
</div>
<div class="tr" style="top:318px">
<svg style="left:2px;top:3px" width="12" height="15" viewBox="0 0 12 15"><rect x="0.600" y="0.600" width="10" height="13.5" rx="2" fill="#fff" stroke="#1b6ab0" stroke-width="1.2"/><path d="M4 5.500 H7 M4 8.500 H7" stroke="#1b6ab0" stroke-width="1.1"/></svg>
<div class="c" style="left:19px;letter-spacing:0.52px">xptusd</div>
<div class="c" style="left:164px">52563773862</div>
<div class="c r " style="left:273px;width:137px">2025.05.22 05:37:20</div>
<div class="c r " style="left:413px;width:122px">buy</div>
<div class="c r " style="left:538px;width:122px">0.1</div>
<div class="c r " style="left:663px;width:122px">1082.398</div>
<div class="c r " style="left:1038px;width:122px">1078.001</div>
<div class="c r red" style="left:1288px;width:116px">-0.44</div>
<svg style="left:1412px;top:6px" width="9" height="9" viewBox="0 0 9 9"><path d="M1 1 L8 8 M8 1 L1 8" stroke="#858585" stroke-width="1.9" fill="none"/></svg>
<div class="v" style="left:160px"></div>
<div class="v" style="left:273px"></div>
<div class="v" style="left:413px"></div>
<div class="v" style="left:538px"></div>
<div class="v" style="left:663px"></div>
<div class="v" style="left:788px"></div>
<div class="v" style="left:913px"></div>
<div class="v" style="left:1038px"></div>
<div class="v" style="left:1163px"></div>
<div class="v" style="left:1288px"></div>
<div class="v" style="left:1426px"></div>
<div class="v" style="left:1546px"></div>
</div>
<div class="tr g" style="top:339px">
<svg style="left:2px;top:3px" width="12" height="15" viewBox="0 0 12 15"><rect x="0.600" y="0.600" width="10" height="13.5" rx="2" fill="#fff" stroke="#1b6ab0" stroke-width="1.2"/><path d="M4 5.500 H7 M4 8.500 H7" stroke="#1b6ab0" stroke-width="1.1"/></svg>
<div class="c" style="left:19px;letter-spacing:0.52px">xptusd</div>
<div class="c" style="left:164px">52563773871</div>
<div class="c r " style="left:273px;width:137px">2025.05.22 05:37:20</div>
<div class="c r " style="left:413px;width:122px">buy</div>
<div class="c r " style="left:538px;width:122px">0.1</div>
<div class="c r " style="left:663px;width:122px">1082.398</div>
<div class="c r " style="left:1038px;width:122px">1078.001</div>
<div class="c r red" style="left:1288px;width:116px">-0.44</div>
<svg style="left:1412px;top:6px" width="9" height="9" viewBox="0 0 9 9"><path d="M1 1 L8 8 M8 1 L1 8" stroke="#858585" stroke-width="1.9" fill="none"/></svg>
<div class="v" style="left:160px"></div>
<div class="v" style="left:273px"></div>
<div class="v" style="left:413px"></div>
<div class="v" style="left:538px"></div>
<div class="v" style="left:663px"></div>
<div class="v" style="left:788px"></div>
<div class="v" style="left:913px"></div>
<div class="v" style="left:1038px"></div>
<div class="v" style="left:1163px"></div>
<div class="v" style="left:1288px"></div>
<div class="v" style="left:1426px"></div>
<div class="v" style="left:1546px"></div>
</div>
<div class="tr" style="top:360px">
<svg style="left:2px;top:3px" width="12" height="15" viewBox="0 0 12 15"><rect x="0.600" y="0.600" width="10" height="13.5" rx="2" fill="#fff" stroke="#d83b32" stroke-width="1.2"/><path d="M4 5.500 H7 M4 8.500 H7" stroke="#d83b32" stroke-width="1.1"/></svg>
<div class="c" style="left:19px;letter-spacing:0.52px">xptusd</div>
<div class="c" style="left:164px">52563773906</div>
<div class="c r " style="left:273px;width:137px">2025.05.22 05:37:21</div>
<div class="c r " style="left:413px;width:122px">sell</div>
<div class="c r " style="left:538px;width:122px">0.1</div>
<div class="c r " style="left:663px;width:122px">1080.201</div>
<div class="c r " style="left:1038px;width:122px">1080.208</div>
<div class="c r " style="left:1288px;width:116px">0.00</div>
<svg style="left:1412px;top:6px" width="9" height="9" viewBox="0 0 9 9"><path d="M1 1 L8 8 M8 1 L1 8" stroke="#858585" stroke-width="1.9" fill="none"/></svg>
<div class="v" style="left:160px"></div>
<div class="v" style="left:273px"></div>
<div class="v" style="left:413px"></div>
<div class="v" style="left:538px"></div>
<div class="v" style="left:663px"></div>
<div class="v" style="left:788px"></div>
<div class="v" style="left:913px"></div>
<div class="v" style="left:1038px"></div>
<div class="v" style="left:1163px"></div>
<div class="v" style="left:1288px"></div>
<div class="v" style="left:1426px"></div>
<div class="v" style="left:1546px"></div>
</div>
<div class="tr g" style="top:381px">
<svg style="left:2px;top:3px" width="12" height="15" viewBox="0 0 12 15"><rect x="0.600" y="0.600" width="10" height="13.5" rx="2" fill="#fff" stroke="#1b6ab0" stroke-width="1.2"/><path d="M4 5.500 H7 M4 8.500 H7" stroke="#1b6ab0" stroke-width="1.1"/></svg>
<div class="c" style="left:19px;letter-spacing:0.24px">usdhuf</div>
<div class="c" style="left:164px">52563774282</div>
<div class="c r " style="left:273px;width:137px">2025.05.22 05:37:32</div>
<div class="c r " style="left:413px;width:122px">buy</div>
<div class="c r " style="left:538px;width:122px">0.1</div>
<div class="c r " style="left:663px;width:122px">355.587</div>
<div class="c r " style="left:1038px;width:122px">355.980</div>
<div class="c r blue" style="left:1288px;width:116px">11.04</div>
<svg style="left:1412px;top:6px" width="9" height="9" viewBox="0 0 9 9"><path d="M1 1 L8 8 M8 1 L1 8" stroke="#858585" stroke-width="1.9" fill="none"/></svg>
<div class="v" style="left:160px"></div>
<div class="v" style="left:273px"></div>
<div class="v" style="left:413px"></div>
<div class="v" style="left:538px"></div>
<div class="v" style="left:663px"></div>
<div class="v" style="left:788px"></div>
<div class="v" style="left:913px"></div>
<div class="v" style="left:1038px"></div>
<div class="v" style="left:1163px"></div>
<div class="v" style="left:1288px"></div>
<div class="v" style="left:1426px"></div>
<div class="v" style="left:1546px"></div>
</div>
<div class="tr" style="top:402px">
<svg style="left:2px;top:3px" width="12" height="15" viewBox="0 0 12 15"><rect x="0.600" y="0.600" width="10" height="13.5" rx="2" fill="#fff" stroke="#1b6ab0" stroke-width="1.2"/><path d="M4 5.500 H7 M4 8.500 H7" stroke="#1b6ab0" stroke-width="1.1"/></svg>
<div class="c" style="left:19px;letter-spacing:0.24px">usdhuf</div>
<div class="c" style="left:164px">52563774297</div>
<div class="c r " style="left:273px;width:137px">2025.05.22 05:37:32</div>
<div class="c r " style="left:413px;width:122px">buy</div>
<div class="c r " style="left:538px;width:122px">0.1</div>
<div class="c r " style="left:663px;width:122px">355.590</div>
<div class="c r " style="left:1038px;width:122px">355.980</div>
<div class="c r blue" style="left:1288px;width:116px">10.96</div>
<svg style="left:1412px;top:6px" width="9" height="9" viewBox="0 0 9 9"><path d="M1 1 L8 8 M8 1 L1 8" stroke="#858585" stroke-width="1.9" fill="none"/></svg>
<div class="v" style="left:160px"></div>
<div class="v" style="left:273px"></div>
<div class="v" style="left:413px"></div>
<div class="v" style="left:538px"></div>
<div class="v" style="left:663px"></div>
<div class="v" style="left:788px"></div>
<div class="v" style="left:913px"></div>
<div class="v" style="left:1038px"></div>
<div class="v" style="left:1163px"></div>
<div class="v" style="left:1288px"></div>
<div class="v" style="left:1426px"></div>
<div class="v" style="left:1546px"></div>
</div>
<div class="tr g" style="top:423px">
<svg style="left:2px;top:3px" width="12" height="15" viewBox="0 0 12 15"><rect x="0.600" y="0.600" width="10" height="13.5" rx="2" fill="#fff" stroke="#d83b32" stroke-width="1.2"/><path d="M4 5.500 H7 M4 8.500 H7" stroke="#d83b32" stroke-width="1.1"/></svg>
<div class="c" style="left:19px;letter-spacing:0.24px">usdhuf</div>
<div class="c" style="left:164px">52563774309</div>
<div class="c r " style="left:273px;width:137px">2025.05.22 05:37:33</div>
<div class="c r " style="left:413px;width:122px">sell</div>
<div class="c r " style="left:538px;width:122px">0.1</div>
<div class="c r " style="left:663px;width:122px">354.660</div>
<div class="c r " style="left:1038px;width:122px">356.186</div>
<div class="c r red" style="left:1288px;width:116px">-42.84</div>
<svg style="left:1412px;top:6px" width="9" height="9" viewBox="0 0 9 9"><path d="M1 1 L8 8 M8 1 L1 8" stroke="#858585" stroke-width="1.9" fill="none"/></svg>
<div class="v" style="left:160px"></div>
<div class="v" style="left:273px"></div>
<div class="v" style="left:413px"></div>
<div class="v" style="left:538px"></div>
<div class="v" style="left:663px"></div>
<div class="v" style="left:788px"></div>
<div class="v" style="left:913px"></div>
<div class="v" style="left:1038px"></div>
<div class="v" style="left:1163px"></div>
<div class="v" style="left:1288px"></div>
<div class="v" style="left:1426px"></div>
<div class="v" style="left:1546px"></div>
</div>
<div class="tr" style="top:444px">
<svg style="left:2px;top:3px" width="12" height="15" viewBox="0 0 12 15"><rect x="0.600" y="0.600" width="10" height="13.5" rx="2" fill="#fff" stroke="#d83b32" stroke-width="1.2"/><path d="M4 5.500 H7 M4 8.500 H7" stroke="#d83b32" stroke-width="1.1"/></svg>
<div class="c" style="left:19px;letter-spacing:0.24px">usdhuf</div>
<div class="c" style="left:164px">52563774324</div>
<div class="c r " style="left:273px;width:137px">2025.05.22 05:37:34</div>
<div class="c r " style="left:413px;width:122px">sell</div>
<div class="c r " style="left:538px;width:122px">0.1</div>
<div class="c r " style="left:663px;width:122px">354.663</div>
<div class="c r " style="left:1038px;width:122px">356.186</div>
<div class="c r red" style="left:1288px;width:116px">-42.76</div>
<svg style="left:1412px;top:6px" width="9" height="9" viewBox="0 0 9 9"><path d="M1 1 L8 8 M8 1 L1 8" stroke="#858585" stroke-width="1.9" fill="none"/></svg>
<div class="v" style="left:160px"></div>
<div class="v" style="left:273px"></div>
<div class="v" style="left:413px"></div>
<div class="v" style="left:538px"></div>
<div class="v" style="left:663px"></div>
<div class="v" style="left:788px"></div>
<div class="v" style="left:913px"></div>
<div class="v" style="left:1038px"></div>
<div class="v" style="left:1163px"></div>
<div class="v" style="left:1288px"></div>
<div class="v" style="left:1426px"></div>
<div class="v" style="left:1546px"></div>
</div>
<div class="tr g" style="top:465px">
<svg style="left:2px;top:3px" width="12" height="15" viewBox="0 0 12 15"><rect x="0.600" y="0.600" width="10" height="13.5" rx="2" fill="#fff" stroke="#1b6ab0" stroke-width="1.2"/><path d="M4 5.500 H7 M4 8.500 H7" stroke="#1b6ab0" stroke-width="1.1"/></svg>
<div class="c" style="left:19px;letter-spacing:0px">anss</div>
<div class="c" style="left:164px">52563774479</div>
<div class="c r " style="left:273px;width:137px">2025.05.22 05:37:41</div>
<div class="c r " style="left:413px;width:122px">buy</div>
<div class="c r " style="left:538px;width:122px">1</div>
<div class="c r " style="left:663px;width:122px">346.60</div>
<div class="c r " style="left:1038px;width:122px">343.00</div>
<div class="c r red" style="left:1288px;width:116px">-3.60</div>
<svg style="left:1412px;top:6px" width="9" height="9" viewBox="0 0 9 9"><path d="M1 1 L8 8 M8 1 L1 8" stroke="#858585" stroke-width="1.9" fill="none"/></svg>
<div class="v" style="left:160px"></div>
<div class="v" style="left:273px"></div>
<div class="v" style="left:413px"></div>
<div class="v" style="left:538px"></div>
<div class="v" style="left:663px"></div>
<div class="v" style="left:788px"></div>
<div class="v" style="left:913px"></div>
<div class="v" style="left:1038px"></div>
<div class="v" style="left:1163px"></div>
<div class="v" style="left:1288px"></div>
<div class="v" style="left:1426px"></div>
<div class="v" style="left:1546px"></div>
</div>
<div class="tr" style="top:486px">
<svg style="left:2px;top:3px" width="12" height="15" viewBox="0 0 12 15"><rect x="0.600" y="0.600" width="10" height="13.5" rx="2" fill="#fff" stroke="#d83b32" stroke-width="1.2"/><path d="M4 5.500 H7 M4 8.500 H7" stroke="#d83b32" stroke-width="1.1"/></svg>
<div class="c" style="left:19px;letter-spacing:0.1px">xauusd</div>
<div class="c" style="left:164px">52563829245</div>
<div class="c r " style="left:273px;width:137px">2025.05.22 05:55:19</div>
<div class="c r " style="left:413px;width:122px">sell</div>
<div class="c r " style="left:538px;width:122px">0.01</div>
<div class="c r " style="left:663px;width:122px">3340.39</div>
<div class="c r " style="left:1038px;width:122px">3327.04</div>
<div class="c r blue" style="left:1288px;width:116px">13.35</div>
<svg style="left:1412px;top:6px" width="9" height="9" viewBox="0 0 9 9"><path d="M1 1 L8 8 M8 1 L1 8" stroke="#858585" stroke-width="1.9" fill="none"/></svg>
<div class="c r" style="left:1546px;width:344px;letter-spacing:0.15px">П.EA short</div>
<div class="v" style="left:160px"></div>
<div class="v" style="left:273px"></div>
<div class="v" style="left:413px"></div>
<div class="v" style="left:538px"></div>
<div class="v" style="left:663px"></div>
<div class="v" style="left:788px"></div>
<div class="v" style="left:913px"></div>
<div class="v" style="left:1038px"></div>
<div class="v" style="left:1163px"></div>
<div class="v" style="left:1288px"></div>
<div class="v" style="left:1426px"></div>
<div class="v" style="left:1546px"></div>
</div>
<div class="tr g" style="top:507px">
<svg style="left:2px;top:3px" width="12" height="15" viewBox="0 0 12 15"><rect x="0.600" y="0.600" width="10" height="13.5" rx="2" fill="#fff" stroke="#1b6ab0" stroke-width="1.2"/><path d="M4 5.500 H7 M4 8.500 H7" stroke="#1b6ab0" stroke-width="1.1"/></svg>
<div class="c" style="left:19px;letter-spacing:0.1px">xauusd</div>
<div class="c" style="left:164px">52563831551</div>
<div class="c r " style="left:273px;width:137px">2025.05.22 05:56:00</div>
<div class="c r " style="left:413px;width:122px">buy</div>
<div class="c r " style="left:538px;width:122px">0.01</div>
<div class="c r " style="left:663px;width:122px">3341.01</div>
<div class="c r " style="left:1038px;width:122px">3326.87</div>
<div class="c r red" style="left:1288px;width:116px">-14.14</div>
<svg style="left:1412px;top:6px" width="9" height="9" viewBox="0 0 9 9"><path d="M1 1 L8 8 M8 1 L1 8" stroke="#858585" stroke-width="1.9" fill="none"/></svg>
<div class="c r" style="left:1546px;width:344px;letter-spacing:0.15px">П.EA long</div>
<div class="v" style="left:160px"></div>
<div class="v" style="left:273px"></div>
<div class="v" style="left:413px"></div>
<div class="v" style="left:538px"></div>
<div class="v" style="left:663px"></div>
<div class="v" style="left:788px"></div>
<div class="v" style="left:913px"></div>
<div class="v" style="left:1038px"></div>
<div class="v" style="left:1163px"></div>
<div class="v" style="left:1288px"></div>
<div class="v" style="left:1426px"></div>
<div class="v" style="left:1546px"></div>
</div>
<div class="tr" style="top:528px">
<svg style="left:2px;top:3px" width="12" height="15" viewBox="0 0 12 15"><rect x="0.600" y="0.600" width="10" height="13.5" rx="2" fill="#fff" stroke="#1b6ab0" stroke-width="1.2"/><path d="M4 5.500 H7 M4 8.500 H7" stroke="#1b6ab0" stroke-width="1.1"/></svg>
<div class="c" style="left:19px;letter-spacing:0.1px">xauusd</div>
<div class="c" style="left:164px">52563843698</div>
<div class="c r " style="left:273px;width:137px">2025.05.22 06:00:23</div>
<div class="c r " style="left:413px;width:122px">buy</div>
<div class="c r " style="left:538px;width:122px">0.01</div>
<div class="c r " style="left:663px;width:122px">3341.25</div>
<div class="c r " style="left:1038px;width:122px">3326.87</div>
<div class="c r red" style="left:1288px;width:116px">-14.38</div>
<svg style="left:1412px;top:6px" width="9" height="9" viewBox="0 0 9 9"><path d="M1 1 L8 8 M8 1 L1 8" stroke="#858585" stroke-width="1.9" fill="none"/></svg>
<div class="v" style="left:160px"></div>
<div class="v" style="left:273px"></div>
<div class="v" style="left:413px"></div>
<div class="v" style="left:538px"></div>
<div class="v" style="left:663px"></div>
<div class="v" style="left:788px"></div>
<div class="v" style="left:913px"></div>
<div class="v" style="left:1038px"></div>
<div class="v" style="left:1163px"></div>
<div class="v" style="left:1288px"></div>
<div class="v" style="left:1426px"></div>
<div class="v" style="left:1546px"></div>
</div>
<div class="a" style="left:0;top:548px;width:1894px;height:22px;background:#c8c8c8"></div>
<svg style="left:1px;top:553px" width="13" height="13" viewBox="0 0 13 13"><circle cx="6.300" cy="6.500" r="5.200" fill="none" stroke="#222" stroke-width="1.1"/><path d="M3.500 6.500 H9.100 M6.300 3.700 V9.300" stroke="#222" stroke-width="1.1"/></svg>
<div class="t" style="left:19px;top:553.8px;font-size:12.5px;font-weight:bold;letter-spacing:-0.1px">结余: 106 501.58 USD</div>
<div class="t" style="left:151.5px;top:553.8px;font-size:12.5px;font-weight:bold;letter-spacing:-0.11px">净值: 107 484.16</div>
<div class="t" style="left:253.2px;top:553.8px;font-size:12.5px;font-weight:bold;letter-spacing:-0.145px">预付款: 5 846.72</div>
<div class="t" style="left:353.5px;top:553.8px;font-size:12.5px;font-weight:bold;letter-spacing:-0.18px">可用预付款: 101 637.44</div>
<div class="t" style="left:491px;top:553.8px;font-size:12.5px;font-weight:bold;letter-spacing:-0.215px">预付款维持率: 1 838.37 %</div>
<div class="t" style="left:1288px;top:553.8px;width:116px;text-align:right;font-size:12.5px;font-weight:bold">982.58</div>
<div class="a" style="left:1896px;top:0;width:1px;height:604px;background:#e8e8e8"></div>
</div>
<svg class="wm" style="left:0;top:0;pointer-events:none" width="1898" height="970" viewBox="0 0 1898 970"><text x="0" y="0" dx="0 2.98 2.98 3.3 2.35 2.47 3.4 5" transform="translate(-189.7,-69.1) rotate(-34.8) scale(0.87,1)" font-size="38" font-family="Liberation Sans, sans-serif" fill="rgba(255,255,255,0.18)" stroke="rgba(0,0,0,0.27)" stroke-width="1.2" stroke-linejoin="round" vector-effect="non-scaling-stroke">EAHub.cn</text><text x="0" y="0" dx="0 2.98 2.98 3.3 2.35 2.47 3.4 5" transform="translate(60.3,-69.1) rotate(-34.8) scale(0.87,1)" font-size="38" font-family="Liberation Sans, sans-serif" fill="rgba(255,255,255,0.18)" stroke="rgba(0,0,0,0.27)" stroke-width="1.2" stroke-linejoin="round" vector-effect="non-scaling-stroke">EAHub.cn</text><text x="0" y="0" dx="0 2.98 2.98 3.3 2.35 2.47 3.4 5" transform="translate(310.3,-69.1) rotate(-34.8) scale(0.87,1)" font-size="38" font-family="Liberation Sans, sans-serif" fill="rgba(255,255,255,0.18)" stroke="rgba(0,0,0,0.27)" stroke-width="1.2" stroke-linejoin="round" vector-effect="non-scaling-stroke">EAHub.cn</text><text x="0" y="0" dx="0 2.98 2.98 3.3 2.35 2.47 3.4 5" transform="translate(560.3,-69.1) rotate(-34.8) scale(0.87,1)" font-size="38" font-family="Liberation Sans, sans-serif" fill="rgba(255,255,255,0.18)" stroke="rgba(0,0,0,0.27)" stroke-width="1.2" stroke-linejoin="round" vector-effect="non-scaling-stroke">EAHub.cn</text><text x="0" y="0" dx="0 2.98 2.98 3.3 2.35 2.47 3.4 5" transform="translate(810.3,-69.1) rotate(-34.8) scale(0.87,1)" font-size="38" font-family="Liberation Sans, sans-serif" fill="rgba(255,255,255,0.18)" stroke="rgba(0,0,0,0.27)" stroke-width="1.2" stroke-linejoin="round" vector-effect="non-scaling-stroke">EAHub.cn</text><text x="0" y="0" dx="0 2.98 2.98 3.3 2.35 2.47 3.4 5" transform="translate(1060.3,-69.1) rotate(-34.8) scale(0.87,1)" font-size="38" font-family="Liberation Sans, sans-serif" fill="rgba(255,255,255,0.18)" stroke="rgba(0,0,0,0.27)" stroke-width="1.2" stroke-linejoin="round" vector-effect="non-scaling-stroke">EAHub.cn</text><text x="0" y="0" dx="0 2.98 2.98 3.3 2.35 2.47 3.4 5" transform="translate(1310.3,-69.1) rotate(-34.8) scale(0.87,1)" font-size="38" font-family="Liberation Sans, sans-serif" fill="rgba(255,255,255,0.18)" stroke="rgba(0,0,0,0.27)" stroke-width="1.2" stroke-linejoin="round" vector-effect="non-scaling-stroke">EAHub.cn</text><text x="0" y="0" dx="0 2.98 2.98 3.3 2.35 2.47 3.4 5" transform="translate(1560.3,-69.1) rotate(-34.8) scale(0.87,1)" font-size="38" font-family="Liberation Sans, sans-serif" fill="rgba(255,255,255,0.18)" stroke="rgba(0,0,0,0.27)" stroke-width="1.2" stroke-linejoin="round" vector-effect="non-scaling-stroke">EAHub.cn</text><text x="0" y="0" dx="0 2.98 2.98 3.3 2.35 2.47 3.4 5" transform="translate(1810.3,-69.1) rotate(-34.8) scale(0.87,1)" font-size="38" font-family="Liberation Sans, sans-serif" fill="rgba(255,255,255,0.18)" stroke="rgba(0,0,0,0.27)" stroke-width="1.2" stroke-linejoin="round" vector-effect="non-scaling-stroke">EAHub.cn</text><text x="0" y="0" dx="0 2.98 2.98 3.3 2.35 2.47 3.4 5" transform="translate(-189.7,180.9) rotate(-34.8) scale(0.87,1)" font-size="38" font-family="Liberation Sans, sans-serif" fill="rgba(255,255,255,0.18)" stroke="rgba(0,0,0,0.27)" stroke-width="1.2" stroke-linejoin="round" vector-effect="non-scaling-stroke">EAHub.cn</text><text x="0" y="0" dx="0 2.98 2.98 3.3 2.35 2.47 3.4 5" transform="translate(60.3,180.9) rotate(-34.8) scale(0.87,1)" font-size="38" font-family="Liberation Sans, sans-serif" fill="rgba(255,255,255,0.18)" stroke="rgba(0,0,0,0.27)" stroke-width="1.2" stroke-linejoin="round" vector-effect="non-scaling-stroke">EAHub.cn</text><text x="0" y="0" dx="0 2.98 2.98 3.3 2.35 2.47 3.4 5" transform="translate(310.3,180.9) rotate(-34.8) scale(0.87,1)" font-size="38" font-family="Liberation Sans, sans-serif" fill="rgba(255,255,255,0.18)" stroke="rgba(0,0,0,0.27)" stroke-width="1.2" stroke-linejoin="round" vector-effect="non-scaling-stroke">EAHub.cn</text><text x="0" y="0" dx="0 2.98 2.98 3.3 2.35 2.47 3.4 5" transform="translate(560.3,180.9) rotate(-34.8) scale(0.87,1)" font-size="38" font-family="Liberation Sans, sans-serif" fill="rgba(255,255,255,0.18)" stroke="rgba(0,0,0,0.27)" stroke-width="1.2" stroke-linejoin="round" vector-effect="non-scaling-stroke">EAHub.cn</text><text x="0" y="0" dx="0 2.98 2.98 3.3 2.35 2.47 3.4 5" transform="translate(810.3,180.9) rotate(-34.8) scale(0.87,1)" font-size="38" font-family="Liberation Sans, sans-serif" fill="rgba(255,255,255,0.18)" stroke="rgba(0,0,0,0.27)" stroke-width="1.2" stroke-linejoin="round" vector-effect="non-scaling-stroke">EAHub.cn</text><text x="0" y="0" dx="0 2.98 2.98 3.3 2.35 2.47 3.4 5" transform="translate(1060.3,180.9) rotate(-34.8) scale(0.87,1)" font-size="38" font-family="Liberation Sans, sans-serif" fill="rgba(255,255,255,0.18)" stroke="rgba(0,0,0,0.27)" stroke-width="1.2" stroke-linejoin="round" vector-effect="non-scaling-stroke">EAHub.cn</text><text x="0" y="0" dx="0 2.98 2.98 3.3 2.35 2.47 3.4 5" transform="translate(1310.3,180.9) rotate(-34.8) scale(0.87,1)" font-size="38" font-family="Liberation Sans, sans-serif" fill="rgba(255,255,255,0.18)" stroke="rgba(0,0,0,0.27)" stroke-width="1.2" stroke-linejoin="round" vector-effect="non-scaling-stroke">EAHub.cn</text><text x="0" y="0" dx="0 2.98 2.98 3.3 2.35 2.47 3.4 5" transform="translate(1560.3,180.9) rotate(-34.8) scale(0.87,1)" font-size="38" font-family="Liberation Sans, sans-serif" fill="rgba(255,255,255,0.18)" stroke="rgba(0,0,0,0.27)" stroke-width="1.2" stroke-linejoin="round" vector-effect="non-scaling-stroke">EAHub.cn</text><text x="0" y="0" dx="0 2.98 2.98 3.3 2.35 2.47 3.4 5" transform="translate(1810.3,180.9) rotate(-34.8) scale(0.87,1)" font-size="38" font-family="Liberation Sans, sans-serif" fill="rgba(255,255,255,0.18)" stroke="rgba(0,0,0,0.27)" stroke-width="1.2" stroke-linejoin="round" vector-effect="non-scaling-stroke">EAHub.cn</text><text x="0" y="0" dx="0 2.98 2.98 3.3 2.35 2.47 3.4 5" transform="translate(-189.7,430.9) rotate(-34.8) scale(0.87,1)" font-size="38" font-family="Liberation Sans, sans-serif" fill="rgba(255,255,255,0.18)" stroke="rgba(0,0,0,0.27)" stroke-width="1.2" stroke-linejoin="round" vector-effect="non-scaling-stroke">EAHub.cn</text><text x="0" y="0" dx="0 2.98 2.98 3.3 2.35 2.47 3.4 5" transform="translate(60.3,430.9) rotate(-34.8) scale(0.87,1)" font-size="38" font-family="Liberation Sans, sans-serif" fill="rgba(255,255,255,0.18)" stroke="rgba(0,0,0,0.27)" stroke-width="1.2" stroke-linejoin="round" vector-effect="non-scaling-stroke">EAHub.cn</text><text x="0" y="0" dx="0 2.98 2.98 3.3 2.35 2.47 3.4 5" transform="translate(310.3,430.9) rotate(-34.8) scale(0.87,1)" font-size="38" font-family="Liberation Sans, sans-serif" fill="rgba(255,255,255,0.18)" stroke="rgba(0,0,0,0.27)" stroke-width="1.2" stroke-linejoin="round" vector-effect="non-scaling-stroke">EAHub.cn</text><text x="0" y="0" dx="0 2.98 2.98 3.3 2.35 2.47 3.4 5" transform="translate(560.3,430.9) rotate(-34.8) scale(0.87,1)" font-size="38" font-family="Liberation Sans, sans-serif" fill="rgba(255,255,255,0.18)" stroke="rgba(0,0,0,0.27)" stroke-width="1.2" stroke-linejoin="round" vector-effect="non-scaling-stroke">EAHub.cn</text><text x="0" y="0" dx="0 2.98 2.98 3.3 2.35 2.47 3.4 5" transform="translate(810.3,430.9) rotate(-34.8) scale(0.87,1)" font-size="38" font-family="Liberation Sans, sans-serif" fill="rgba(255,255,255,0.18)" stroke="rgba(0,0,0,0.27)" stroke-width="1.2" stroke-linejoin="round" vector-effect="non-scaling-stroke">EAHub.cn</text><text x="0" y="0" dx="0 2.98 2.98 3.3 2.35 2.47 3.4 5" transform="translate(1060.3,430.9) rotate(-34.8) scale(0.87,1)" font-size="38" font-family="Liberation Sans, sans-serif" fill="rgba(255,255,255,0.18)" stroke="rgba(0,0,0,0.27)" stroke-width="1.2" stroke-linejoin="round" vector-effect="non-scaling-stroke">EAHub.cn</text><text x="0" y="0" dx="0 2.98 2.98 3.3 2.35 2.47 3.4 5" transform="translate(1310.3,430.9) rotate(-34.8) scale(0.87,1)" font-size="38" font-family="Liberation Sans, sans-serif" fill="rgba(255,255,255,0.18)" stroke="rgba(0,0,0,0.27)" stroke-width="1.2" stroke-linejoin="round" vector-effect="non-scaling-stroke">EAHub.cn</text><text x="0" y="0" dx="0 2.98 2.98 3.3 2.35 2.47 3.4 5" transform="translate(1560.3,430.9) rotate(-34.8) scale(0.87,1)" font-size="38" font-family="Liberation Sans, sans-serif" fill="rgba(255,255,255,0.18)" stroke="rgba(0,0,0,0.27)" stroke-width="1.2" stroke-linejoin="round" vector-effect="non-scaling-stroke">EAHub.cn</text><text x="0" y="0" dx="0 2.98 2.98 3.3 2.35 2.47 3.4 5" transform="translate(1810.3,430.9) rotate(-34.8) scale(0.87,1)" font-size="38" font-family="Liberation Sans, sans-serif" fill="rgba(255,255,255,0.18)" stroke="rgba(0,0,0,0.27)" stroke-width="1.2" stroke-linejoin="round" vector-effect="non-scaling-stroke">EAHub.cn</text><text x="0" y="0" dx="0 2.98 2.98 3.3 2.35 2.47 3.4 5" transform="translate(-189.7,680.9) rotate(-34.8) scale(0.87,1)" font-size="38" font-family="Liberation Sans, sans-serif" fill="rgba(255,255,255,0.18)" stroke="rgba(0,0,0,0.27)" stroke-width="1.2" stroke-linejoin="round" vector-effect="non-scaling-stroke">EAHub.cn</text><text x="0" y="0" dx="0 2.98 2.98 3.3 2.35 2.47 3.4 5" transform="translate(60.3,680.9) rotate(-34.8) scale(0.87,1)" font-size="38" font-family="Liberation Sans, sans-serif" fill="rgba(255,255,255,0.18)" stroke="rgba(0,0,0,0.27)" stroke-width="1.2" stroke-linejoin="round" vector-effect="non-scaling-stroke">EAHub.cn</text><text x="0" y="0" dx="0 2.98 2.98 3.3 2.35 2.47 3.4 5" transform="translate(310.3,680.9) rotate(-34.8) scale(0.87,1)" font-size="38" font-family="Liberation Sans, sans-serif" fill="rgba(255,255,255,0.18)" stroke="rgba(0,0,0,0.27)" stroke-width="1.2" stroke-linejoin="round" vector-effect="non-scaling-stroke">EAHub.cn</text><text x="0" y="0" dx="0 2.98 2.98 3.3 2.35 2.47 3.4 5" transform="translate(560.3,680.9) rotate(-34.8) scale(0.87,1)" font-size="38" font-family="Liberation Sans, sans-serif" fill="rgba(255,255,255,0.18)" stroke="rgba(0,0,0,0.27)" stroke-width="1.2" stroke-linejoin="round" vector-effect="non-scaling-stroke">EAHub.cn</text><text x="0" y="0" dx="0 2.98 2.98 3.3 2.35 2.47 3.4 5" transform="translate(810.3,680.9) rotate(-34.8) scale(0.87,1)" font-size="38" font-family="Liberation Sans, sans-serif" fill="rgba(255,255,255,0.18)" stroke="rgba(0,0,0,0.27)" stroke-width="1.2" stroke-linejoin="round" vector-effect="non-scaling-stroke">EAHub.cn</text><text x="0" y="0" dx="0 2.98 2.98 3.3 2.35 2.47 3.4 5" transform="translate(1060.3,680.9) rotate(-34.8) scale(0.87,1)" font-size="38" font-family="Liberation Sans, sans-serif" fill="rgba(255,255,255,0.18)" stroke="rgba(0,0,0,0.27)" stroke-width="1.2" stroke-linejoin="round" vector-effect="non-scaling-stroke">EAHub.cn</text><text x="0" y="0" dx="0 2.98 2.98 3.3 2.35 2.47 3.4 5" transform="translate(1310.3,680.9) rotate(-34.8) scale(0.87,1)" font-size="38" font-family="Liberation Sans, sans-serif" fill="rgba(255,255,255,0.18)" stroke="rgba(0,0,0,0.27)" stroke-width="1.2" stroke-linejoin="round" vector-effect="non-scaling-stroke">EAHub.cn</text><text x="0" y="0" dx="0 2.98 2.98 3.3 2.35 2.47 3.4 5" transform="translate(1560.3,680.9) rotate(-34.8) scale(0.87,1)" font-size="38" font-family="Liberation Sans, sans-serif" fill="rgba(255,255,255,0.18)" stroke="rgba(0,0,0,0.27)" stroke-width="1.2" stroke-linejoin="round" vector-effect="non-scaling-stroke">EAHub.cn</text><text x="0" y="0" dx="0 2.98 2.98 3.3 2.35 2.47 3.4 5" transform="translate(1810.3,680.9) rotate(-34.8) scale(0.87,1)" font-size="38" font-family="Liberation Sans, sans-serif" fill="rgba(255,255,255,0.18)" stroke="rgba(0,0,0,0.27)" stroke-width="1.2" stroke-linejoin="round" vector-effect="non-scaling-stroke">EAHub.cn</text><text x="0" y="0" dx="0 2.98 2.98 3.3 2.35 2.47 3.4 5" transform="translate(-189.7,930.9) rotate(-34.8) scale(0.87,1)" font-size="38" font-family="Liberation Sans, sans-serif" fill="rgba(255,255,255,0.18)" stroke="rgba(0,0,0,0.27)" stroke-width="1.2" stroke-linejoin="round" vector-effect="non-scaling-stroke">EAHub.cn</text><text x="0" y="0" dx="0 2.98 2.98 3.3 2.35 2.47 3.4 5" transform="translate(60.3,930.9) rotate(-34.8) scale(0.87,1)" font-size="38" font-family="Liberation Sans, sans-serif" fill="rgba(255,255,255,0.18)" stroke="rgba(0,0,0,0.27)" stroke-width="1.2" stroke-linejoin="round" vector-effect="non-scaling-stroke">EAHub.cn</text><text x="0" y="0" dx="0 2.98 2.98 3.3 2.35 2.47 3.4 5" transform="translate(310.3,930.9) rotate(-34.8) scale(0.87,1)" font-size="38" font-family="Liberation Sans, sans-serif" fill="rgba(255,255,255,0.18)" stroke="rgba(0,0,0,0.27)" stroke-width="1.2" stroke-linejoin="round" vector-effect="non-scaling-stroke">EAHub.cn</text><text x="0" y="0" dx="0 2.98 2.98 3.3 2.35 2.47 3.4 5" transform="translate(560.3,930.9) rotate(-34.8) scale(0.87,1)" font-size="38" font-family="Liberation Sans, sans-serif" fill="rgba(255,255,255,0.18)" stroke="rgba(0,0,0,0.27)" stroke-width="1.2" stroke-linejoin="round" vector-effect="non-scaling-stroke">EAHub.cn</text><text x="0" y="0" dx="0 2.98 2.98 3.3 2.35 2.47 3.4 5" transform="translate(810.3,930.9) rotate(-34.8) scale(0.87,1)" font-size="38" font-family="Liberation Sans, sans-serif" fill="rgba(255,255,255,0.18)" stroke="rgba(0,0,0,0.27)" stroke-width="1.2" stroke-linejoin="round" vector-effect="non-scaling-stroke">EAHub.cn</text><text x="0" y="0" dx="0 2.98 2.98 3.3 2.35 2.47 3.4 5" transform="translate(1060.3,930.9) rotate(-34.8) scale(0.87,1)" font-size="38" font-family="Liberation Sans, sans-serif" fill="rgba(255,255,255,0.18)" stroke="rgba(0,0,0,0.27)" stroke-width="1.2" stroke-linejoin="round" vector-effect="non-scaling-stroke">EAHub.cn</text><text x="0" y="0" dx="0 2.98 2.98 3.3 2.35 2.47 3.4 5" transform="translate(1310.3,930.9) rotate(-34.8) scale(0.87,1)" font-size="38" font-family="Liberation Sans, sans-serif" fill="rgba(255,255,255,0.18)" stroke="rgba(0,0,0,0.27)" stroke-width="1.2" stroke-linejoin="round" vector-effect="non-scaling-stroke">EAHub.cn</text><text x="0" y="0" dx="0 2.98 2.98 3.3 2.35 2.47 3.4 5" transform="translate(1560.3,930.9) rotate(-34.8) scale(0.87,1)" font-size="38" font-family="Liberation Sans, sans-serif" fill="rgba(255,255,255,0.18)" stroke="rgba(0,0,0,0.27)" stroke-width="1.2" stroke-linejoin="round" vector-effect="non-scaling-stroke">EAHub.cn</text><text x="0" y="0" dx="0 2.98 2.98 3.3 2.35 2.47 3.4 5" transform="translate(1810.3,930.9) rotate(-34.8) scale(0.87,1)" font-size="38" font-family="Liberation Sans, sans-serif" fill="rgba(255,255,255,0.18)" stroke="rgba(0,0,0,0.27)" stroke-width="1.2" stroke-linejoin="round" vector-effect="non-scaling-stroke">EAHub.cn</text></svg>
</div></body></html>
